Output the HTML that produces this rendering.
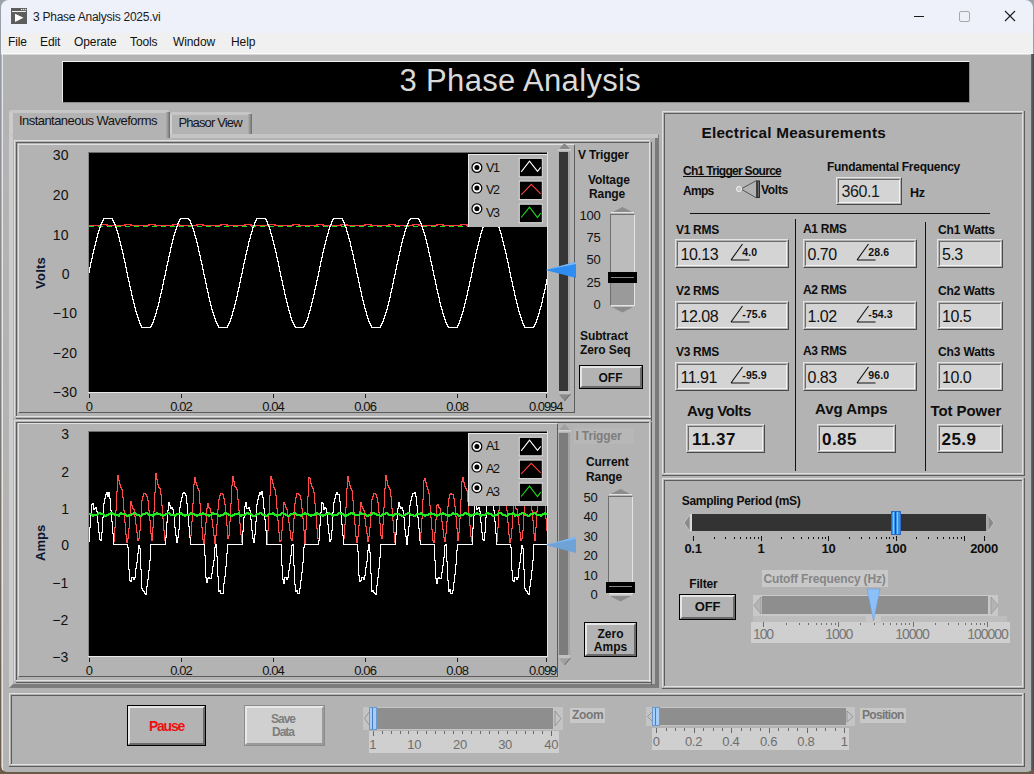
<!DOCTYPE html>
<html><head><meta charset="utf-8"><style>
html,body{margin:0;padding:0;width:1034px;height:774px;overflow:hidden;background:#555;}
body{position:relative;font-family:"Liberation Sans",sans-serif;}
body div, body svg{position:absolute;}
</style></head><body>
<div style="left:0;top:0;width:1034px;height:774px;background:linear-gradient(#9aa2ae,#7a7570 60%,#6a5a48);"></div>
<div style="left:1px;top:0px;width:1032px;height:772px;background:#b3b3b3;border-radius:8px 8px 6px 6px;overflow:hidden;"><div style="left:0;top:0;width:1032px;height:33px;background:#eef1f9;"></div><div style="left:0;top:33px;width:1032px;height:20px;background:#f0f0f0;"></div></div>
<div style="left:1px;top:53px;width:1032px;height:1px;background:#fafafa;"></div>
<div style="left:1px;top:54px;width:1032px;height:1px;background:#d6d6d6;"></div>
<div style="left:2px;top:54px;width:1px;height:716px;background:#e6e6e6;"></div>
<div style="left:1031px;top:54px;width:3px;height:716px;background:linear-gradient(90deg,#6a6a6a,#444);"></div>
<div style="left:11px;top:8px;width:16px;height:16px;background:#5d5d5d;"></div>
<div style="left:12px;top:11px;width:14px;height:1px;background:#f0f0f0;"></div>
<svg style="left:11px;top:8px" width="16" height="16"><polygon points="4,5.8 4,14 12.5,9.8" fill="#fff"/><circle cx="10.7" cy="1.5" r="0.7" fill="#f0f0f0"/><circle cx="12.7" cy="1.5" r="0.7" fill="#f0f0f0"/><circle cx="14.7" cy="1.5" r="0.7" fill="#f0f0f0"/></svg>
<div style="left:33px;top:11.24px;font-size:12px;line-height:12px;color:#1b1b1b;white-space:nowrap;letter-spacing:-0.25px;">3 Phase Analysis 2025.vi</div>
<div style="left:914px;top:16px;width:10px;height:1px;background:#1a1a1a;"></div>
<div style="left:959px;top:11px;width:9px;height:9px;border:1px solid #a8a8a8;border-radius:2px;"></div>
<svg style="left:1004px;top:10px" width="12" height="12"><path d="M1,1 L11,11 M11,1 L1,11" stroke="#1a1a1a" stroke-width="1.1"/></svg>
<div style="left:8px;top:36.04px;font-size:12px;line-height:12px;color:#111;white-space:nowrap;letter-spacing:-0.1px;">File</div>
<div style="left:40px;top:36.04px;font-size:12px;line-height:12px;color:#111;white-space:nowrap;letter-spacing:-0.1px;">Edit</div>
<div style="left:74px;top:36.04px;font-size:12px;line-height:12px;color:#111;white-space:nowrap;letter-spacing:-0.1px;">Operate</div>
<div style="left:130px;top:36.04px;font-size:12px;line-height:12px;color:#111;white-space:nowrap;letter-spacing:-0.1px;">Tools</div>
<div style="left:173px;top:36.04px;font-size:12px;line-height:12px;color:#111;white-space:nowrap;letter-spacing:-0.1px;">Window</div>
<div style="left:231px;top:36.04px;font-size:12px;line-height:12px;color:#111;white-space:nowrap;letter-spacing:-0.1px;">Help</div>
<div style="left:62px;top:61px;width:908px;height:42px;background:#000;border-top:1px solid #f0f0f0;border-left:1px solid #e8e8e8;border-right:1px solid #8a8a8a;border-bottom:1px solid #8a8a8a;box-sizing:border-box;"></div>
<div style="left:399.5px;top:64.76px;font-size:31px;line-height:31px;color:#dadada;white-space:nowrap;letter-spacing:0.35px;">3 Phase Analysis</div>
<div style="left:9px;top:110px;width:161px;height:30px;background:#b3b3b3;border-radius:3px 4px 0 0;border-top:3px solid #c6c6c6;border-left:4px solid #cbcbcb;box-sizing:border-box;"></div>
<div style="left:170px;top:112px;width:82px;height:22px;background:#b3b3b3;border-radius:3px 4px 0 0;border-top:3px solid #c6c6c6;border-left:2px solid #d0d0d0;box-sizing:border-box;"></div>
<div style="left:248px;top:114px;width:4px;height:20px;background:linear-gradient(90deg,#b0b0b0,#8a8a8a 60%,#6a6a6a);"></div>
<div style="left:19px;top:114.30px;font-size:13px;line-height:13px;color:#141414;white-space:nowrap;letter-spacing:-0.55px;">Instantaneous Waveforms</div>
<div style="left:178.4px;top:115.60px;font-size:13px;line-height:13px;color:#141414;white-space:nowrap;letter-spacing:-0.85px;">Phasor View</div>
<div style="left:10px;top:134px;width:648px;height:553px;background:#b3b3b3;"></div>
<div style="left:9px;top:134px;width:650px;height:554px;box-sizing:border-box;border-style:solid;border-width:4px 4px 4px 4px;border-color:#c6c6c6 #7a7a7a #7c7c7c #cdcdcd;"></div>
<div style="left:170px;top:134px;width:488px;height:4px;background:#c4c4c4;"></div>
<div style="left:13px;top:134px;width:153px;height:5px;background:#b3b3b3;"></div>
<div style="left:166px;top:112px;width:4px;height:26px;background:linear-gradient(90deg,#b0b0b0,#8a8a8a 60%,#6a6a6a);"></div>
<div style="left:14px;top:140px;width:636px;height:1px;background:#e0e0e0;"></div>
<div style="left:14px;top:140px;width:1px;height:277px;background:#e0e0e0;"></div>
<div style="left:16px;top:416px;width:635px;height:1px;background:#e0e0e0;"></div>
<div style="left:649px;top:142px;width:1px;height:276px;background:#e0e0e0;"></div>
<div style="left:16px;top:142px;width:633px;height:1px;background:#5c5c5c;"></div>
<div style="left:16px;top:142px;width:1px;height:274px;background:#5c5c5c;"></div>
<div style="left:16px;top:418px;width:636px;height:1px;background:#5c5c5c;"></div>
<div style="left:651px;top:142px;width:1px;height:279px;background:#5c5c5c;"></div>
<div style="left:14px;top:420px;width:636px;height:1px;background:#e0e0e0;"></div>
<div style="left:14px;top:420px;width:1px;height:261px;background:#e0e0e0;"></div>
<div style="left:16px;top:680px;width:635px;height:1px;background:#e0e0e0;"></div>
<div style="left:649px;top:422px;width:1px;height:260px;background:#e0e0e0;"></div>
<div style="left:16px;top:422px;width:633px;height:1px;background:#5c5c5c;"></div>
<div style="left:16px;top:422px;width:1px;height:258px;background:#5c5c5c;"></div>
<div style="left:16px;top:682px;width:636px;height:1px;background:#5c5c5c;"></div>
<div style="left:651px;top:422px;width:1px;height:263px;background:#5c5c5c;"></div>
<div style="left:18px;top:144px;width:556px;height:1px;background:#e0e0e0;"></div>
<div style="left:18px;top:144px;width:1px;height:268px;background:#e0e0e0;"></div>
<div style="left:19px;top:412px;width:556px;height:1px;background:#5c5c5c;"></div>
<div style="left:574px;top:145px;width:1px;height:268px;background:#5c5c5c;"></div>
<div style="left:18px;top:423px;width:539px;height:1px;background:#e0e0e0;"></div>
<div style="left:18px;top:423px;width:1px;height:253px;background:#e0e0e0;"></div>
<div style="left:19px;top:676px;width:539px;height:1px;background:#5c5c5c;"></div>
<div style="left:557px;top:424px;width:1px;height:253px;background:#5c5c5c;"></div>
<div style="left:88px;top:152px;width:459px;height:240px;background:#000;border-left:1px solid #8a8a8a;border-top:1px solid #6a6a6a;box-sizing:border-box;"></div>
<div style="left:88px;top:392px;width:460px;height:1px;background:#e8e8e8;"></div>
<div style="left:547px;top:152px;width:1px;height:240px;background:#e0e0e0;"></div>
<div style="left:88px;top:431px;width:459px;height:225px;background:#000;border-left:1px solid #8a8a8a;border-top:1px solid #6a6a6a;box-sizing:border-box;"></div>
<div style="left:88px;top:656px;width:460px;height:1px;background:#e8e8e8;"></div>
<div style="left:547px;top:431px;width:1px;height:225px;background:#e0e0e0;"></div>
<svg style="left:0;top:0" width="1034" height="774"><clipPath id="c1"><rect x="89" y="153" width="458" height="239"/></clipPath><clipPath id="c2"><rect x="89" y="432" width="458" height="224"/></clipPath><g clip-path="url(#c1)" fill="none"><path d="M89.00,225.50 L95.00,225.50 L95.00,225.50 L101.00,225.50 L101.00,224.50 L107.00,224.50 L107.00,225.50 L113.00,225.50 L113.00,225.50 L119.00,225.50 L119.00,225.50 L125.00,225.50 L125.00,224.50 L131.00,224.50 L131.00,225.50 L137.00,225.50 L137.00,225.50 L143.00,225.50 L143.00,225.50 L149.00,225.50 L149.00,224.50 L155.00,224.50 L155.00,225.50 L161.00,225.50 L161.00,225.50 L167.00,225.50 L167.00,225.50 L173.00,225.50 L173.00,224.50 L179.00,224.50 L179.00,225.50 L185.00,225.50 L185.00,225.50 L191.00,225.50 L191.00,225.50 L197.00,225.50 L197.00,224.50 L203.00,224.50 L203.00,225.50 L209.00,225.50 L209.00,225.50 L215.00,225.50 L215.00,225.50 L221.00,225.50 L221.00,224.50 L227.00,224.50 L227.00,225.50 L233.00,225.50 L233.00,225.50 L239.00,225.50 L239.00,225.50 L245.00,225.50 L245.00,224.50 L251.00,224.50 L251.00,225.50 L257.00,225.50 L257.00,225.50 L263.00,225.50 L263.00,225.50 L269.00,225.50 L269.00,224.50 L275.00,224.50 L275.00,225.50 L281.00,225.50 L281.00,225.50 L287.00,225.50 L287.00,225.50 L293.00,225.50 L293.00,224.50 L299.00,224.50 L299.00,225.50 L305.00,225.50 L305.00,225.50 L311.00,225.50 L311.00,225.50 L317.00,225.50 L317.00,224.50 L323.00,224.50 L323.00,225.50 L329.00,225.50 L329.00,225.50 L335.00,225.50 L335.00,225.50 L341.00,225.50 L341.00,224.50 L347.00,224.50 L347.00,225.50 L353.00,225.50 L353.00,225.50 L359.00,225.50 L359.00,225.50 L365.00,225.50 L365.00,224.50 L371.00,224.50 L371.00,225.50 L377.00,225.50 L377.00,225.50 L383.00,225.50 L383.00,225.50 L389.00,225.50 L389.00,224.50 L395.00,224.50 L395.00,225.50 L401.00,225.50 L401.00,225.50 L407.00,225.50 L407.00,225.50 L413.00,225.50 L413.00,224.50 L419.00,224.50 L419.00,225.50 L425.00,225.50 L425.00,225.50 L431.00,225.50 L431.00,225.50 L437.00,225.50 L437.00,224.50 L443.00,224.50 L443.00,225.50 L449.00,225.50 L449.00,225.50 L455.00,225.50 L455.00,225.50 L461.00,225.50 L461.00,224.50 L467.00,224.50 L467.00,225.50 L473.00,225.50 L473.00,225.50 L479.00,225.50 L479.00,225.50 L485.00,225.50 L485.00,224.50 L491.00,224.50 L491.00,225.50 L497.00,225.50 L497.00,225.50 L503.00,225.50 L503.00,225.50 L509.00,225.50 L509.00,224.50 L515.00,224.50 L515.00,225.50 L521.00,225.50 L521.00,225.50 L527.00,225.50 L527.00,225.50 L533.00,225.50 L533.00,224.50 L539.00,224.50 L539.00,225.50 L545.00,225.50 L545.00,225.50 L551.00,225.50" stroke="#ff3c3c" stroke-width="1.1" shape-rendering="crispEdges"/><path d="M89,226.5 H547" stroke="#19e019" stroke-width="1.2" stroke-dasharray="5,4" shape-rendering="crispEdges"/><path d="M89,267h1v6h-1zM90,262h1v6h-1zM91,258h1v5h-1zM92,253h1v6h-1zM93,249h1v5h-1zM94,245h1v5h-1zM95,241h1v5h-1zM96,237h1v5h-1zM97,233h1v5h-1zM98,230h1v4h-1zM99,227h1v4h-1zM100,224h1v4h-1zM101,222h1v3h-1zM102,220h1v3h-1zM103,218h1v3h-1zM104,218h1v1h-1zM105,218h1v1h-1zM106,218h1v1h-1zM107,218h1v1h-1zM108,218h1v1h-1zM109,218h1v1h-1zM110,218h1v1h-1zM111,218h1v1h-1zM112,218h1v3h-1zM113,220h1v3h-1zM114,222h1v3h-1zM115,224h1v4h-1zM116,227h1v4h-1zM117,230h1v4h-1zM118,233h1v5h-1zM119,237h1v5h-1zM120,241h1v5h-1zM121,245h1v5h-1zM122,249h1v5h-1zM123,253h1v6h-1zM124,258h1v5h-1zM125,262h1v6h-1zM126,267h1v6h-1zM127,272h1v6h-1zM128,277h1v5h-1zM129,281h1v6h-1zM130,286h1v5h-1zM131,290h1v6h-1zM132,295h1v5h-1zM133,299h1v5h-1zM134,303h1v5h-1zM135,307h1v5h-1zM136,311h1v4h-1zM137,314h1v4h-1zM138,317h1v4h-1zM139,320h1v4h-1zM140,323h1v3h-1zM141,325h1v3h-1zM142,327h1v1h-1zM143,327h1v1h-1zM144,327h1v1h-1zM145,327h1v1h-1zM146,327h1v1h-1zM147,327h1v1h-1zM148,327h1v1h-1zM149,327h1v1h-1zM150,326h1v2h-1zM151,324h1v3h-1zM152,322h1v3h-1zM153,319h1v4h-1zM154,316h1v4h-1zM155,313h1v4h-1zM156,309h1v5h-1zM157,306h1v4h-1zM158,302h1v5h-1zM159,297h1v6h-1zM160,293h1v5h-1zM161,289h1v5h-1zM162,284h1v6h-1zM163,279h1v6h-1zM164,275h1v5h-1zM165,270h1v6h-1zM166,265h1v6h-1zM167,261h1v5h-1zM168,256h1v6h-1zM169,252h1v5h-1zM170,247h1v6h-1zM171,243h1v5h-1zM172,239h1v5h-1zM173,235h1v5h-1zM174,232h1v4h-1zM175,229h1v4h-1zM176,226h1v4h-1zM177,223h1v4h-1zM178,221h1v3h-1zM179,219h1v3h-1zM180,218h1v2h-1zM181,218h1v1h-1zM182,218h1v1h-1zM183,218h1v1h-1zM184,218h1v1h-1zM185,218h1v1h-1zM186,218h1v1h-1zM187,218h1v1h-1zM188,218h1v2h-1zM189,219h1v2h-1zM190,220h1v4h-1zM191,223h1v3h-1zM192,225h1v4h-1zM193,228h1v4h-1zM194,231h1v5h-1zM195,235h1v4h-1zM196,238h1v5h-1zM197,242h1v5h-1zM198,246h1v6h-1zM199,251h1v5h-1zM200,255h1v6h-1zM201,260h1v5h-1zM202,264h1v6h-1zM203,269h1v6h-1zM204,274h1v5h-1zM205,278h1v6h-1zM206,283h1v6h-1zM207,288h1v5h-1zM208,292h1v6h-1zM209,297h1v5h-1zM210,301h1v5h-1zM211,305h1v5h-1zM212,309h1v4h-1zM213,312h1v4h-1zM214,315h1v4h-1zM215,318h1v4h-1zM216,321h1v3h-1zM217,323h1v3h-1zM218,325h1v3h-1zM219,327h1v1h-1zM220,327h1v1h-1zM221,327h1v1h-1zM222,327h1v1h-1zM223,327h1v1h-1zM224,327h1v1h-1zM225,327h1v1h-1zM226,327h1v1h-1zM227,325h1v3h-1zM228,323h1v3h-1zM229,321h1v3h-1zM230,318h1v4h-1zM231,315h1v4h-1zM232,311h1v5h-1zM233,308h1v4h-1zM234,304h1v5h-1zM235,300h1v5h-1zM236,296h1v5h-1zM237,291h1v6h-1zM238,287h1v5h-1zM239,282h1v6h-1zM240,277h1v6h-1zM241,273h1v5h-1zM242,268h1v6h-1zM243,263h1v6h-1zM244,259h1v5h-1zM245,254h1v6h-1zM246,250h1v5h-1zM247,246h1v5h-1zM248,241h1v6h-1zM249,238h1v4h-1zM250,234h1v5h-1zM251,231h1v4h-1zM252,227h1v5h-1zM253,225h1v3h-1zM254,222h1v4h-1zM255,220h1v3h-1zM256,218h1v3h-1zM257,218h1v1h-1zM258,218h1v1h-1zM259,218h1v1h-1zM260,218h1v1h-1zM261,218h1v1h-1zM262,218h1v1h-1zM263,218h1v1h-1zM264,218h1v1h-1zM265,218h1v2h-1zM266,219h1v3h-1zM267,221h1v4h-1zM268,224h1v3h-1zM269,226h1v4h-1zM270,229h1v5h-1zM271,233h1v4h-1zM272,236h1v5h-1zM273,240h1v5h-1zM274,244h1v5h-1zM275,248h1v5h-1zM276,252h1v6h-1zM277,257h1v5h-1zM278,261h1v6h-1zM279,266h1v6h-1zM280,271h1v6h-1zM281,276h1v5h-1zM282,280h1v6h-1zM283,285h1v5h-1zM284,289h1v6h-1zM285,294h1v5h-1zM286,298h1v5h-1zM287,302h1v5h-1zM288,306h1v5h-1zM289,310h1v4h-1zM290,313h1v5h-1zM291,317h1v4h-1zM292,320h1v3h-1zM293,322h1v3h-1zM294,324h1v3h-1zM295,326h1v2h-1zM296,327h1v1h-1zM297,327h1v1h-1zM298,327h1v1h-1zM299,327h1v1h-1zM300,327h1v1h-1zM301,327h1v1h-1zM302,327h1v1h-1zM303,326h1v2h-1zM304,324h1v3h-1zM305,322h1v3h-1zM306,320h1v3h-1zM307,317h1v4h-1zM308,313h1v5h-1zM309,310h1v4h-1zM310,306h1v5h-1zM311,302h1v5h-1zM312,298h1v5h-1zM313,294h1v5h-1zM314,289h1v6h-1zM315,285h1v5h-1zM316,280h1v6h-1zM317,276h1v5h-1zM318,271h1v6h-1zM319,266h1v6h-1zM320,261h1v6h-1zM321,257h1v5h-1zM322,252h1v6h-1zM323,248h1v5h-1zM324,244h1v5h-1zM325,240h1v5h-1zM326,236h1v5h-1zM327,233h1v4h-1zM328,229h1v5h-1zM329,226h1v4h-1zM330,224h1v3h-1zM331,221h1v4h-1zM332,219h1v3h-1zM333,218h1v2h-1zM334,218h1v1h-1zM335,218h1v1h-1zM336,218h1v1h-1zM337,218h1v1h-1zM338,218h1v1h-1zM339,218h1v1h-1zM340,218h1v1h-1zM341,218h1v1h-1zM342,218h1v3h-1zM343,220h1v3h-1zM344,222h1v4h-1zM345,225h1v3h-1zM346,227h1v5h-1zM347,231h1v4h-1zM348,234h1v5h-1zM349,238h1v4h-1zM350,241h1v6h-1zM351,246h1v5h-1zM352,250h1v5h-1zM353,254h1v6h-1zM354,259h1v5h-1zM355,263h1v6h-1zM356,268h1v6h-1zM357,273h1v5h-1zM358,277h1v6h-1zM359,282h1v6h-1zM360,287h1v5h-1zM361,291h1v6h-1zM362,296h1v5h-1zM363,300h1v5h-1zM364,304h1v5h-1zM365,308h1v4h-1zM366,311h1v5h-1zM367,315h1v4h-1zM368,318h1v4h-1zM369,321h1v3h-1zM370,323h1v3h-1zM371,325h1v3h-1zM372,327h1v1h-1zM373,327h1v1h-1zM374,327h1v1h-1zM375,327h1v1h-1zM376,327h1v1h-1zM377,327h1v1h-1zM378,327h1v1h-1zM379,327h1v1h-1zM380,325h1v3h-1zM381,323h1v3h-1zM382,321h1v3h-1zM383,318h1v4h-1zM384,315h1v4h-1zM385,312h1v4h-1zM386,309h1v4h-1zM387,305h1v5h-1zM388,301h1v5h-1zM389,297h1v5h-1zM390,292h1v6h-1zM391,288h1v5h-1zM392,283h1v6h-1zM393,278h1v6h-1zM394,274h1v5h-1zM395,269h1v6h-1zM396,264h1v6h-1zM397,260h1v5h-1zM398,255h1v6h-1zM399,251h1v5h-1zM400,246h1v6h-1zM401,242h1v5h-1zM402,238h1v5h-1zM403,235h1v4h-1zM404,231h1v5h-1zM405,228h1v4h-1zM406,225h1v4h-1zM407,223h1v3h-1zM408,220h1v4h-1zM409,219h1v2h-1zM410,218h1v2h-1zM411,218h1v1h-1zM412,218h1v1h-1zM413,218h1v1h-1zM414,218h1v1h-1zM415,218h1v1h-1zM416,218h1v1h-1zM417,218h1v1h-1zM418,218h1v2h-1zM419,219h1v3h-1zM420,221h1v3h-1zM421,223h1v4h-1zM422,226h1v4h-1zM423,229h1v4h-1zM424,232h1v4h-1zM425,235h1v5h-1zM426,239h1v5h-1zM427,243h1v5h-1zM428,247h1v6h-1zM429,252h1v5h-1zM430,256h1v6h-1zM431,261h1v5h-1zM432,265h1v6h-1zM433,270h1v6h-1zM434,275h1v5h-1zM435,279h1v6h-1zM436,284h1v6h-1zM437,289h1v5h-1zM438,293h1v5h-1zM439,297h1v6h-1zM440,302h1v5h-1zM441,306h1v4h-1zM442,309h1v5h-1zM443,313h1v4h-1zM444,316h1v4h-1zM445,319h1v4h-1zM446,322h1v3h-1zM447,324h1v3h-1zM448,326h1v2h-1zM449,327h1v1h-1zM450,327h1v1h-1zM451,327h1v1h-1zM452,327h1v1h-1zM453,327h1v1h-1zM454,327h1v1h-1zM455,327h1v1h-1zM456,327h1v1h-1zM457,325h1v3h-1zM458,323h1v3h-1zM459,320h1v4h-1zM460,317h1v4h-1zM461,314h1v4h-1zM462,311h1v4h-1zM463,307h1v5h-1zM464,303h1v5h-1zM465,299h1v5h-1zM466,295h1v5h-1zM467,290h1v6h-1zM468,286h1v5h-1zM469,281h1v6h-1zM470,277h1v5h-1zM471,272h1v6h-1zM472,267h1v6h-1zM473,262h1v6h-1zM474,258h1v5h-1zM475,253h1v6h-1zM476,249h1v5h-1zM477,245h1v5h-1zM478,241h1v5h-1zM479,237h1v5h-1zM480,233h1v5h-1zM481,230h1v4h-1zM482,227h1v4h-1zM483,224h1v4h-1zM484,222h1v3h-1zM485,220h1v3h-1zM486,218h1v3h-1zM487,218h1v1h-1zM488,218h1v1h-1zM489,218h1v1h-1zM490,218h1v1h-1zM491,218h1v1h-1zM492,218h1v1h-1zM493,218h1v1h-1zM494,218h1v1h-1zM495,218h1v3h-1zM496,220h1v3h-1zM497,222h1v3h-1zM498,224h1v4h-1zM499,227h1v4h-1zM500,230h1v4h-1zM501,233h1v5h-1zM502,237h1v5h-1zM503,241h1v5h-1zM504,245h1v5h-1zM505,249h1v5h-1zM506,253h1v6h-1zM507,258h1v5h-1zM508,262h1v6h-1zM509,267h1v6h-1zM510,272h1v6h-1zM511,277h1v5h-1zM512,281h1v6h-1zM513,286h1v5h-1zM514,290h1v6h-1zM515,295h1v5h-1zM516,299h1v5h-1zM517,303h1v5h-1zM518,307h1v5h-1zM519,311h1v4h-1zM520,314h1v4h-1zM521,317h1v4h-1zM522,320h1v4h-1zM523,323h1v3h-1zM524,325h1v3h-1zM525,327h1v1h-1zM526,327h1v1h-1zM527,327h1v1h-1zM528,327h1v1h-1zM529,327h1v1h-1zM530,327h1v1h-1zM531,327h1v1h-1zM532,327h1v1h-1zM533,326h1v2h-1zM534,324h1v3h-1zM535,322h1v3h-1zM536,319h1v4h-1zM537,316h1v4h-1zM538,313h1v4h-1zM539,309h1v5h-1zM540,306h1v4h-1zM541,302h1v5h-1zM542,297h1v6h-1zM543,293h1v5h-1zM544,289h1v5h-1zM545,284h1v6h-1zM546,279h1v6h-1z" fill="#fff" shape-rendering="crispEdges"/></g><g clip-path="url(#c2)" fill="none"><path d="M89,527h1v15h-1zM90,515h1v13h-1zM91,504h1v12h-1zM92,503h1v2h-1zM93,503h1v7h-1zM94,508h1v2h-1zM95,507h1v2h-1zM96,507h1v5h-1zM97,511h1v12h-1zM98,522h1v11h-1zM99,532h1v8h-1zM100,539h1v2h-1zM101,532h1v9h-1zM102,517h1v16h-1zM103,503h1v15h-1zM104,498h1v6h-1zM105,494h1v5h-1zM106,492h1v3h-1zM107,492h1v5h-1zM108,492h1v5h-1zM109,492h1v7h-1zM110,498h1v13h-1zM111,510h1v12h-1zM112,521h1v13h-1zM113,533h1v9h-1zM114,527h1v15h-1zM115,510h1v18h-1zM116,491h1v20h-1zM117,475h1v17h-1zM118,475h1v6h-1zM119,480h1v5h-1zM120,484h1v4h-1zM121,487h1v3h-1zM122,489h1v9h-1zM123,497h1v14h-1zM124,510h1v13h-1zM125,522h1v13h-1zM126,534h1v9h-1zM127,538h1v5h-1zM128,528h1v11h-1zM129,514h1v15h-1zM130,501h1v14h-1zM131,501h1v5h-1zM132,505h1v4h-1zM133,508h1v2h-1zM134,509h1v8h-1zM135,516h1v9h-1zM136,524h1v9h-1zM137,532h1v9h-1zM138,538h1v3h-1zM139,530h1v9h-1zM140,515h1v16h-1zM141,500h1v16h-1zM142,496h1v5h-1zM143,493h1v4h-1zM144,493h1v1h-1zM145,493h1v2h-1zM146,494h1v3h-1zM147,496h1v5h-1zM148,500h1v11h-1zM149,510h1v11h-1zM150,520h1v14h-1zM151,533h1v8h-1zM152,527h1v14h-1zM153,511h1v17h-1zM154,492h1v20h-1zM155,473h1v20h-1zM156,473h1v7h-1zM157,479h1v6h-1zM158,484h1v4h-1zM159,487h1v2h-1zM160,488h1v7h-1zM161,494h1v12h-1zM162,505h1v14h-1zM163,518h1v13h-1zM164,530h1v11h-1zM165,535h1v6h-1zM166,521h1v15h-1zM167,510h1v12h-1zM168,502h1v9h-1zM169,502h1v4h-1zM170,505h1v4h-1zM171,507h1v2h-1zM172,507h1v3h-1zM173,509h1v6h-1zM174,514h1v14h-1zM175,527h1v9h-1zM176,535h1v8h-1zM177,537h1v6h-1zM178,529h1v9h-1zM179,507h1v23h-1zM180,501h1v7h-1zM181,497h1v5h-1zM182,493h1v5h-1zM183,492h1v2h-1zM184,492h1v2h-1zM185,493h1v3h-1zM186,495h1v9h-1zM187,503h1v13h-1zM188,515h1v12h-1zM189,526h1v12h-1zM190,535h1v3h-1zM191,521h1v15h-1zM192,503h1v19h-1zM193,484h1v20h-1zM194,477h1v8h-1zM195,477h1v6h-1zM196,482h1v4h-1zM197,485h1v4h-1zM198,488h1v3h-1zM199,490h1v14h-1zM200,503h1v13h-1zM201,515h1v13h-1zM202,527h1v13h-1zM203,539h1v5h-1zM204,534h1v10h-1zM205,522h1v13h-1zM206,508h1v15h-1zM207,503h1v6h-1zM208,503h1v5h-1zM209,507h1v2h-1zM210,508h1v5h-1zM211,512h1v8h-1zM212,519h1v9h-1zM213,527h1v9h-1zM214,535h1v9h-1zM215,535h1v9h-1zM216,524h1v12h-1zM217,509h1v16h-1zM218,499h1v11h-1zM219,495h1v5h-1zM220,493h1v3h-1zM221,493h1v1h-1zM222,493h1v2h-1zM223,494h1v5h-1zM224,498h1v7h-1zM225,504h1v11h-1zM226,514h1v12h-1zM227,525h1v14h-1zM228,535h1v4h-1zM229,521h1v15h-1zM230,503h1v19h-1zM231,485h1v19h-1zM232,476h1v10h-1zM233,476h1v6h-1zM234,481h1v6h-1zM235,486h1v2h-1zM236,487h1v3h-1zM237,489h1v11h-1zM238,499h1v12h-1zM239,510h1v14h-1zM240,523h1v12h-1zM241,534h1v9h-1zM242,530h1v13h-1zM243,517h1v14h-1zM244,506h1v12h-1zM245,502h1v5h-1zM246,502h1v7h-1zM247,508h1v1h-1zM248,507h1v2h-1zM249,507h1v4h-1zM250,510h1v10h-1zM251,519h1v12h-1zM252,530h1v9h-1zM253,538h1v5h-1zM254,534h1v9h-1zM255,521h1v14h-1zM256,504h1v18h-1zM257,499h1v6h-1zM258,495h1v5h-1zM259,492h1v4h-1zM260,492h1v3h-1zM261,491h1v4h-1zM262,491h1v7h-1zM263,497h1v12h-1zM264,508h1v12h-1zM265,519h1v12h-1zM266,530h1v15h-1zM267,530h1v15h-1zM268,514h1v17h-1zM269,495h1v20h-1zM270,476h1v20h-1zM271,476h1v4h-1zM272,479h1v5h-1zM273,483h1v5h-1zM274,487h1v3h-1zM275,489h1v7h-1zM276,495h1v14h-1zM277,508h1v13h-1zM278,520h1v13h-1zM279,532h1v10h-1zM280,540h1v2h-1zM281,530h1v11h-1zM282,517h1v14h-1zM283,502h1v16h-1zM284,502h1v3h-1zM285,504h1v4h-1zM286,507h1v3h-1zM287,509h1v7h-1zM288,515h1v8h-1zM289,522h1v9h-1zM290,530h1v9h-1zM291,538h1v3h-1zM292,532h1v9h-1zM293,518h1v15h-1zM294,503h1v16h-1zM295,497h1v7h-1zM296,493h1v5h-1zM297,493h1v1h-1zM298,493h1v2h-1zM299,494h1v2h-1zM300,495h1v5h-1zM301,499h1v10h-1zM302,508h1v11h-1zM303,518h1v13h-1zM304,530h1v14h-1zM305,529h1v15h-1zM306,514h1v16h-1zM307,496h1v19h-1zM308,477h1v20h-1zM309,477h1v2h-1zM310,478h1v6h-1zM311,483h1v4h-1zM312,486h1v3h-1zM313,488h1v5h-1zM314,492h1v12h-1zM315,503h1v13h-1zM316,515h1v14h-1zM317,528h1v11h-1zM318,538h1v1h-1zM319,524h1v15h-1zM320,512h1v13h-1zM321,502h1v11h-1zM322,502h1v2h-1zM323,503h1v7h-1zM324,507h1v3h-1zM325,507h1v2h-1zM326,508h1v5h-1zM327,512h1v13h-1zM328,524h1v10h-1zM329,533h1v9h-1zM330,539h1v3h-1zM331,530h1v10h-1zM332,512h1v19h-1zM333,502h1v11h-1zM334,498h1v5h-1zM335,494h1v5h-1zM336,492h1v3h-1zM337,492h1v3h-1zM338,494h1v1h-1zM339,494h1v8h-1zM340,501h1v12h-1zM341,512h1v13h-1zM342,524h1v12h-1zM343,535h1v4h-1zM344,524h1v15h-1zM345,507h1v18h-1zM346,488h1v20h-1zM347,476h1v13h-1zM348,476h1v6h-1zM349,481h1v5h-1zM350,485h1v4h-1zM351,488h1v3h-1zM352,490h1v11h-1zM353,500h1v13h-1zM354,512h1v13h-1zM355,524h1v13h-1zM356,536h1v7h-1zM357,536h1v7h-1zM358,525h1v12h-1zM359,511h1v15h-1zM360,502h1v10h-1zM361,502h1v5h-1zM362,506h1v3h-1zM363,508h1v3h-1zM364,510h1v9h-1zM365,518h1v9h-1zM366,526h1v8h-1zM367,533h1v9h-1zM368,536h1v6h-1zM369,527h1v10h-1zM370,512h1v16h-1zM371,499h1v14h-1zM372,496h1v4h-1zM373,493h1v4h-1zM374,493h1v1h-1zM375,493h1v2h-1zM376,494h1v4h-1zM377,497h1v6h-1zM378,502h1v11h-1zM379,512h1v12h-1zM380,523h1v13h-1zM381,535h1v4h-1zM382,524h1v15h-1zM383,507h1v18h-1zM384,488h1v20h-1zM385,475h1v14h-1zM386,475h1v6h-1zM387,480h1v6h-1zM388,485h1v3h-1zM389,487h1v3h-1zM390,489h1v8h-1zM391,496h1v13h-1zM392,508h1v13h-1zM393,520h1v13h-1zM394,532h1v11h-1zM395,532h1v11h-1zM396,519h1v14h-1zM397,508h1v12h-1zM398,502h1v7h-1zM399,502h1v5h-1zM400,506h1v3h-1zM401,507h1v2h-1zM402,507h1v4h-1zM403,510h1v8h-1zM404,517h1v13h-1zM405,529h1v8h-1zM406,536h1v9h-1zM407,535h1v10h-1zM408,526h1v10h-1zM409,505h1v22h-1zM410,500h1v6h-1zM411,496h1v5h-1zM412,493h1v4h-1zM413,493h1v1h-1zM414,492h1v2h-1zM415,492h1v5h-1zM416,496h1v10h-1zM417,505h1v13h-1zM418,517h1v12h-1zM419,528h1v13h-1zM420,532h1v9h-1zM421,518h1v15h-1zM422,499h1v20h-1zM423,480h1v20h-1zM424,478h1v3h-1zM425,478h1v5h-1zM426,482h1v5h-1zM427,486h1v4h-1zM428,489h1v5h-1zM429,493h1v13h-1zM430,505h1v13h-1zM431,517h1v13h-1zM432,529h1v12h-1zM433,540h1v3h-1zM434,532h1v11h-1zM435,519h1v14h-1zM436,505h1v15h-1zM437,504h1v2h-1zM438,504h1v4h-1zM439,507h1v2h-1zM440,508h1v6h-1zM441,513h1v9h-1zM442,521h1v9h-1zM443,529h1v9h-1zM444,537h1v5h-1zM445,533h1v9h-1zM446,521h1v13h-1zM447,506h1v16h-1zM448,498h1v9h-1zM449,494h1v5h-1zM450,493h1v2h-1zM451,493h1v2h-1zM452,494h1v1h-1zM453,494h1v5h-1zM454,498h1v9h-1zM455,506h1v11h-1zM456,516h1v13h-1zM457,528h1v13h-1zM458,532h1v9h-1zM459,518h1v15h-1zM460,499h1v20h-1zM461,481h1v19h-1zM462,477h1v5h-1zM463,477h1v6h-1zM464,482h1v5h-1zM465,486h1v3h-1zM466,488h1v3h-1zM467,490h1v12h-1zM468,501h1v13h-1zM469,513h1v13h-1zM470,525h1v12h-1zM471,536h1v6h-1zM472,527h1v15h-1zM473,515h1v13h-1zM474,504h1v12h-1zM475,503h1v2h-1zM476,503h1v7h-1zM477,508h1v2h-1zM478,507h1v2h-1zM479,507h1v5h-1zM480,511h1v12h-1zM481,522h1v11h-1zM482,532h1v8h-1zM483,539h1v2h-1zM484,532h1v9h-1zM485,517h1v16h-1zM486,503h1v15h-1zM487,498h1v6h-1zM488,494h1v5h-1zM489,492h1v3h-1zM490,492h1v5h-1zM491,492h1v5h-1zM492,492h1v7h-1zM493,498h1v13h-1zM494,510h1v12h-1zM495,521h1v13h-1zM496,533h1v9h-1zM497,527h1v15h-1zM498,510h1v18h-1zM499,491h1v20h-1zM500,475h1v17h-1zM501,475h1v6h-1zM502,480h1v5h-1zM503,484h1v4h-1zM504,487h1v3h-1zM505,489h1v10h-1zM506,498h1v13h-1zM507,510h1v13h-1zM508,522h1v13h-1zM509,534h1v9h-1zM510,538h1v5h-1zM511,528h1v11h-1zM512,514h1v15h-1zM513,501h1v14h-1zM514,501h1v5h-1zM515,505h1v4h-1zM516,508h1v2h-1zM517,509h1v8h-1zM518,516h1v9h-1zM519,524h1v9h-1zM520,532h1v9h-1zM521,538h1v3h-1zM522,530h1v9h-1zM523,515h1v16h-1zM524,500h1v16h-1zM525,496h1v5h-1zM526,493h1v4h-1zM527,493h1v1h-1zM528,493h1v2h-1zM529,494h1v3h-1zM530,496h1v5h-1zM531,500h1v11h-1zM532,510h1v11h-1zM533,520h1v14h-1zM534,533h1v8h-1zM535,527h1v14h-1zM536,511h1v17h-1zM537,492h1v20h-1zM538,473h1v20h-1zM539,473h1v7h-1zM540,479h1v6h-1zM541,484h1v4h-1zM542,487h1v2h-1zM543,488h1v7h-1zM544,494h1v12h-1zM545,505h1v14h-1zM546,518h1v13h-1z" fill="#ff4a4a" shape-rendering="crispEdges"/><path d="M89,527h1v15h-1zM90,515h1v13h-1zM91,504h1v12h-1zM92,503h1v2h-1zM93,503h1v7h-1zM94,508h1v2h-1zM95,507h1v2h-1zM96,507h1v5h-1zM97,511h1v12h-1zM98,522h1v11h-1zM99,532h1v8h-1zM100,539h1v2h-1zM101,532h1v9h-1zM102,517h1v16h-1zM103,503h1v15h-1zM104,498h1v6h-1zM105,494h1v5h-1zM106,492h1v3h-1zM107,492h1v5h-1zM108,492h1v5h-1zM109,492h1v7h-1zM110,498h1v13h-1zM111,510h1v12h-1zM112,521h1v13h-1zM113,533h1v12h-1zM114,544h1v1h-1zM115,544h1v1h-1zM116,544h1v1h-1zM117,544h1v1h-1zM118,544h1v1h-1zM119,544h1v1h-1zM120,544h1v1h-1zM121,544h1v1h-1zM122,544h1v1h-1zM123,544h1v1h-1zM124,544h1v1h-1zM125,544h1v1h-1zM126,544h1v1h-1zM127,544h1v4h-1zM128,547h1v23h-1zM129,569h1v12h-1zM130,580h1v2h-1zM131,577h1v5h-1zM132,577h1v1h-1zM133,577h1v3h-1zM134,577h1v3h-1zM135,568h1v10h-1zM136,562h1v7h-1zM137,553h1v10h-1zM138,545h1v9h-1zM139,545h1v4h-1zM140,548h1v22h-1zM141,569h1v20h-1zM142,588h1v3h-1zM143,590h1v2h-1zM144,591h1v3h-1zM145,593h1v2h-1zM146,586h1v9h-1zM147,579h1v8h-1zM148,570h1v10h-1zM149,560h1v11h-1zM150,544h1v17h-1zM151,544h1v1h-1zM152,544h1v1h-1zM153,544h1v1h-1zM154,544h1v1h-1zM155,544h1v1h-1zM156,544h1v1h-1zM157,544h1v1h-1zM158,544h1v1h-1zM159,544h1v1h-1zM160,544h1v1h-1zM161,544h1v1h-1zM162,544h1v1h-1zM163,544h1v1h-1zM164,544h1v1h-1zM165,537h1v8h-1zM166,522h1v16h-1zM167,510h1v13h-1zM168,502h1v9h-1zM169,502h1v4h-1zM170,505h1v4h-1zM171,507h1v2h-1zM172,507h1v3h-1zM173,509h1v6h-1zM174,514h1v14h-1zM175,527h1v9h-1zM176,535h1v8h-1zM177,537h1v6h-1zM178,529h1v9h-1zM179,507h1v23h-1zM180,501h1v7h-1zM181,497h1v5h-1zM182,493h1v5h-1zM183,492h1v2h-1zM184,492h1v2h-1zM185,493h1v3h-1zM186,495h1v9h-1zM187,503h1v13h-1zM188,515h1v12h-1zM189,526h1v12h-1zM190,537h1v8h-1zM191,544h1v1h-1zM192,544h1v1h-1zM193,544h1v1h-1zM194,544h1v1h-1zM195,544h1v1h-1zM196,544h1v1h-1zM197,544h1v1h-1zM198,544h1v1h-1zM199,544h1v1h-1zM200,544h1v1h-1zM201,544h1v1h-1zM202,544h1v1h-1zM203,544h1v1h-1zM204,544h1v12h-1zM205,555h1v23h-1zM206,577h1v6h-1zM207,578h1v5h-1zM208,577h1v2h-1zM209,577h1v2h-1zM210,578h1v1h-1zM211,573h1v6h-1zM212,566h1v8h-1zM213,560h1v7h-1zM214,547h1v14h-1zM215,544h1v4h-1zM216,544h1v13h-1zM217,556h1v21h-1zM218,576h1v16h-1zM219,590h1v2h-1zM220,590h1v4h-1zM221,593h1v1h-1zM222,593h1v1h-1zM223,583h1v11h-1zM224,576h1v8h-1zM225,566h1v11h-1zM226,553h1v14h-1zM227,544h1v10h-1zM228,544h1v1h-1zM229,544h1v1h-1zM230,544h1v1h-1zM231,544h1v1h-1zM232,544h1v1h-1zM233,544h1v1h-1zM234,544h1v1h-1zM235,544h1v1h-1zM236,544h1v1h-1zM237,544h1v1h-1zM238,544h1v1h-1zM239,544h1v1h-1zM240,544h1v1h-1zM241,544h1v1h-1zM242,531h1v14h-1zM243,517h1v15h-1zM244,506h1v12h-1zM245,502h1v5h-1zM246,502h1v7h-1zM247,508h1v1h-1zM248,507h1v2h-1zM249,507h1v4h-1zM250,510h1v10h-1zM251,519h1v12h-1zM252,530h1v9h-1zM253,538h1v5h-1zM254,534h1v9h-1zM255,521h1v14h-1zM256,504h1v18h-1zM257,499h1v6h-1zM258,495h1v5h-1zM259,492h1v4h-1zM260,492h1v3h-1zM261,491h1v4h-1zM262,491h1v7h-1zM263,497h1v12h-1zM264,508h1v12h-1zM265,519h1v12h-1zM266,530h1v15h-1zM267,544h1v1h-1zM268,544h1v1h-1zM269,544h1v1h-1zM270,544h1v1h-1zM271,544h1v1h-1zM272,544h1v1h-1zM273,544h1v1h-1zM274,544h1v1h-1zM275,544h1v1h-1zM276,544h1v1h-1zM277,544h1v1h-1zM278,544h1v1h-1zM279,544h1v1h-1zM280,544h1v1h-1zM281,544h1v22h-1zM282,565h1v15h-1zM283,579h1v5h-1zM284,577h1v7h-1zM285,577h1v1h-1zM286,577h1v3h-1zM287,577h1v3h-1zM288,570h1v8h-1zM289,563h1v8h-1zM290,555h1v9h-1zM291,545h1v11h-1zM292,544h1v2h-1zM293,544h1v22h-1zM294,565h1v20h-1zM295,584h1v8h-1zM296,590h1v2h-1zM297,590h1v4h-1zM298,593h1v1h-1zM299,588h1v6h-1zM300,580h1v9h-1zM301,572h1v9h-1zM302,562h1v11h-1zM303,547h1v16h-1zM304,544h1v4h-1zM305,544h1v1h-1zM306,544h1v1h-1zM307,544h1v1h-1zM308,544h1v1h-1zM309,544h1v1h-1zM310,544h1v1h-1zM311,544h1v1h-1zM312,544h1v1h-1zM313,544h1v1h-1zM314,544h1v1h-1zM315,544h1v1h-1zM316,544h1v1h-1zM317,544h1v1h-1zM318,540h1v5h-1zM319,525h1v16h-1zM320,512h1v14h-1zM321,502h1v11h-1zM322,502h1v2h-1zM323,503h1v7h-1zM324,507h1v3h-1zM325,507h1v2h-1zM326,508h1v5h-1zM327,512h1v13h-1zM328,524h1v10h-1zM329,533h1v9h-1zM330,539h1v3h-1zM331,530h1v10h-1zM332,512h1v19h-1zM333,502h1v11h-1zM334,498h1v5h-1zM335,494h1v5h-1zM336,492h1v3h-1zM337,492h1v3h-1zM338,494h1v1h-1zM339,494h1v8h-1zM340,501h1v12h-1zM341,512h1v13h-1zM342,524h1v12h-1zM343,535h1v10h-1zM344,544h1v1h-1zM345,544h1v1h-1zM346,544h1v1h-1zM347,544h1v1h-1zM348,544h1v1h-1zM349,544h1v1h-1zM350,544h1v1h-1zM351,544h1v1h-1zM352,544h1v1h-1zM353,544h1v1h-1zM354,544h1v1h-1zM355,544h1v1h-1zM356,544h1v1h-1zM357,544h1v8h-1zM358,551h1v25h-1zM359,575h1v7h-1zM360,580h1v2h-1zM361,577h1v4h-1zM362,577h1v1h-1zM363,577h1v3h-1zM364,575h1v5h-1zM365,567h1v9h-1zM366,561h1v7h-1zM367,550h1v12h-1zM368,544h1v7h-1zM369,544h1v9h-1zM370,552h1v22h-1zM371,573h1v19h-1zM372,590h1v2h-1zM373,590h1v3h-1zM374,592h1v2h-1zM375,593h1v2h-1zM376,585h1v10h-1zM377,577h1v9h-1zM378,568h1v10h-1zM379,557h1v12h-1zM380,544h1v14h-1zM381,544h1v1h-1zM382,544h1v1h-1zM383,544h1v1h-1zM384,544h1v1h-1zM385,544h1v1h-1zM386,544h1v1h-1zM387,544h1v1h-1zM388,544h1v1h-1zM389,544h1v1h-1zM390,544h1v1h-1zM391,544h1v1h-1zM392,544h1v1h-1zM393,544h1v1h-1zM394,544h1v1h-1zM395,534h1v11h-1zM396,519h1v16h-1zM397,508h1v12h-1zM398,502h1v7h-1zM399,502h1v5h-1zM400,506h1v3h-1zM401,507h1v2h-1zM402,507h1v4h-1zM403,510h1v8h-1zM404,517h1v13h-1zM405,529h1v8h-1zM406,536h1v9h-1zM407,535h1v10h-1zM408,526h1v10h-1zM409,505h1v22h-1zM410,500h1v6h-1zM411,496h1v5h-1zM412,493h1v4h-1zM413,493h1v1h-1zM414,492h1v2h-1zM415,492h1v5h-1zM416,496h1v10h-1zM417,505h1v13h-1zM418,517h1v12h-1zM419,528h1v13h-1zM420,540h1v5h-1zM421,544h1v1h-1zM422,544h1v1h-1zM423,544h1v1h-1zM424,544h1v1h-1zM425,544h1v1h-1zM426,544h1v1h-1zM427,544h1v1h-1zM428,544h1v1h-1zM429,544h1v1h-1zM430,544h1v1h-1zM431,544h1v1h-1zM432,544h1v1h-1zM433,544h1v1h-1zM434,544h1v17h-1zM435,560h1v19h-1zM436,578h1v6h-1zM437,578h1v6h-1zM438,577h1v2h-1zM439,577h1v2h-1zM440,578h1v1h-1zM441,572h1v7h-1zM442,565h1v8h-1zM443,557h1v9h-1zM444,545h1v13h-1zM445,544h1v2h-1zM446,544h1v18h-1zM447,561h1v20h-1zM448,580h1v12h-1zM449,589h1v3h-1zM450,589h1v5h-1zM451,593h1v1h-1zM452,590h1v4h-1zM453,582h1v9h-1zM454,574h1v9h-1zM455,564h1v11h-1zM456,550h1v15h-1zM457,544h1v7h-1zM458,544h1v1h-1zM459,544h1v1h-1zM460,544h1v1h-1zM461,544h1v1h-1zM462,544h1v1h-1zM463,544h1v1h-1zM464,544h1v1h-1zM465,544h1v1h-1zM466,544h1v1h-1zM467,544h1v1h-1zM468,544h1v1h-1zM469,544h1v1h-1zM470,544h1v1h-1zM471,544h1v1h-1zM472,528h1v17h-1zM473,515h1v14h-1zM474,504h1v12h-1zM475,503h1v2h-1zM476,503h1v7h-1zM477,508h1v2h-1zM478,507h1v2h-1zM479,507h1v5h-1zM480,511h1v12h-1zM481,522h1v11h-1zM482,532h1v8h-1zM483,539h1v2h-1zM484,532h1v9h-1zM485,517h1v16h-1zM486,503h1v15h-1zM487,498h1v6h-1zM488,494h1v5h-1zM489,492h1v3h-1zM490,492h1v5h-1zM491,492h1v5h-1zM492,492h1v7h-1zM493,498h1v13h-1zM494,510h1v12h-1zM495,521h1v13h-1zM496,533h1v12h-1zM497,544h1v1h-1zM498,544h1v1h-1zM499,544h1v1h-1zM500,544h1v1h-1zM501,544h1v1h-1zM502,544h1v1h-1zM503,544h1v1h-1zM504,544h1v1h-1zM505,544h1v1h-1zM506,544h1v1h-1zM507,544h1v1h-1zM508,544h1v1h-1zM509,544h1v1h-1zM510,544h1v4h-1zM511,547h1v24h-1zM512,570h1v11h-1zM513,580h1v2h-1zM514,577h1v5h-1zM515,577h1v1h-1zM516,577h1v3h-1zM517,577h1v3h-1zM518,568h1v10h-1zM519,562h1v7h-1zM520,553h1v10h-1zM521,545h1v9h-1zM522,545h1v4h-1zM523,548h1v22h-1zM524,569h1v20h-1zM525,588h1v3h-1zM526,590h1v2h-1zM527,591h1v3h-1zM528,593h1v2h-1zM529,586h1v9h-1zM530,579h1v8h-1zM531,570h1v10h-1zM532,560h1v11h-1zM533,544h1v17h-1zM534,544h1v1h-1zM535,544h1v1h-1zM536,544h1v1h-1zM537,544h1v1h-1zM538,544h1v1h-1zM539,544h1v1h-1zM540,544h1v1h-1zM541,544h1v1h-1zM542,544h1v1h-1zM543,544h1v1h-1zM544,544h1v1h-1zM545,544h1v1h-1zM546,544h1v1h-1z" fill="#fff" shape-rendering="crispEdges"/><path d="M89,513h1v2h-1zM90,513h1v2h-1zM91,513h1v3h-1zM92,514h1v3h-1zM93,514h1v3h-1zM94,514h1v2h-1zM95,514h1v2h-1zM96,514h1v2h-1zM97,513h1v3h-1zM98,512h1v3h-1zM99,512h1v2h-1zM100,512h1v3h-1zM101,513h1v2h-1zM102,513h1v2h-1zM103,513h1v3h-1zM104,514h1v3h-1zM105,515h1v2h-1zM106,514h1v3h-1zM107,514h1v2h-1zM108,513h1v3h-1zM109,513h1v2h-1zM110,512h1v3h-1zM111,512h1v2h-1zM112,512h1v3h-1zM113,513h1v2h-1zM114,513h1v3h-1zM115,514h1v2h-1zM116,514h1v2h-1zM117,514h1v2h-1zM118,514h1v3h-1zM119,513h1v4h-1zM120,512h1v3h-1zM121,512h1v3h-1zM122,513h1v2h-1zM123,513h1v2h-1zM124,513h1v2h-1zM125,513h1v3h-1zM126,514h1v3h-1zM127,515h1v2h-1zM128,514h1v3h-1zM129,514h1v2h-1zM130,514h1v2h-1zM131,513h1v3h-1zM132,513h1v2h-1zM133,512h1v3h-1zM134,512h1v2h-1zM135,512h1v3h-1zM136,513h1v3h-1zM137,514h1v2h-1zM138,514h1v2h-1zM139,514h1v3h-1zM140,515h1v2h-1zM141,514h1v3h-1zM142,513h1v3h-1zM143,513h1v2h-1zM144,513h1v2h-1zM145,512h1v3h-1zM146,512h1v2h-1zM147,512h1v3h-1zM148,513h1v3h-1zM149,514h1v2h-1zM150,514h1v2h-1zM151,514h1v2h-1zM152,514h1v3h-1zM153,514h1v3h-1zM154,513h1v3h-1zM155,513h1v2h-1zM156,512h1v3h-1zM157,512h1v3h-1zM158,513h1v2h-1zM159,513h1v2h-1zM160,513h1v3h-1zM161,514h1v2h-1zM162,514h1v3h-1zM163,514h1v3h-1zM164,514h1v2h-1zM165,513h1v3h-1zM166,513h1v2h-1zM167,512h1v3h-1zM168,512h1v2h-1zM169,512h1v3h-1zM170,513h1v3h-1zM171,514h1v2h-1zM172,514h1v2h-1zM173,514h1v2h-1zM174,514h1v3h-1zM175,514h1v3h-1zM176,513h1v3h-1zM177,513h1v2h-1zM178,513h1v2h-1zM179,513h1v2h-1zM180,512h1v3h-1zM181,512h1v3h-1zM182,513h1v3h-1zM183,514h1v2h-1zM184,514h1v3h-1zM185,514h1v3h-1zM186,514h1v2h-1zM187,514h1v2h-1zM188,514h1v2h-1zM189,513h1v3h-1zM190,512h1v3h-1zM191,512h1v3h-1zM192,513h1v2h-1zM193,513h1v2h-1zM194,513h1v3h-1zM195,514h1v2h-1zM196,514h1v3h-1zM197,514h1v3h-1zM198,514h1v2h-1zM199,513h1v3h-1zM200,513h1v2h-1zM201,513h1v2h-1zM202,512h1v3h-1zM203,512h1v3h-1zM204,513h1v2h-1zM205,513h1v3h-1zM206,514h1v2h-1zM207,514h1v2h-1zM208,514h1v3h-1zM209,514h1v3h-1zM210,514h1v2h-1zM211,513h1v3h-1zM212,512h1v3h-1zM213,512h1v3h-1zM214,513h1v2h-1zM215,513h1v2h-1zM216,513h1v2h-1zM217,513h1v3h-1zM218,514h1v3h-1zM219,515h1v2h-1zM220,514h1v3h-1zM221,514h1v2h-1zM222,514h1v2h-1zM223,513h1v3h-1zM224,512h1v3h-1zM225,512h1v2h-1zM226,512h1v3h-1zM227,513h1v2h-1zM228,513h1v3h-1zM229,514h1v2h-1zM230,514h1v3h-1zM231,515h1v2h-1zM232,514h1v3h-1zM233,514h1v2h-1zM234,513h1v3h-1zM235,513h1v2h-1zM236,513h1v2h-1zM237,513h1v2h-1zM238,512h1v3h-1zM239,512h1v4h-1zM240,514h1v3h-1zM241,514h1v3h-1zM242,514h1v2h-1zM243,514h1v2h-1zM244,514h1v2h-1zM245,513h1v3h-1zM246,512h1v3h-1zM247,512h1v2h-1zM248,512h1v3h-1zM249,513h1v2h-1zM250,513h1v2h-1zM251,513h1v3h-1zM252,514h1v3h-1zM253,515h1v2h-1zM254,515h1v2h-1zM255,514h1v3h-1zM256,513h1v3h-1zM257,513h1v2h-1zM258,513h1v2h-1zM259,512h1v3h-1zM260,512h1v2h-1zM261,512h1v3h-1zM262,513h1v3h-1zM263,514h1v2h-1zM264,514h1v2h-1zM265,514h1v3h-1zM266,515h1v2h-1zM267,514h1v3h-1zM268,513h1v3h-1zM269,513h1v2h-1zM270,513h1v2h-1zM271,513h1v2h-1zM272,512h1v3h-1zM273,512h1v3h-1zM274,513h1v3h-1zM275,514h1v2h-1zM276,514h1v3h-1zM277,514h1v3h-1zM278,514h1v2h-1zM279,514h1v2h-1zM280,513h1v3h-1zM281,512h1v3h-1zM282,512h1v2h-1zM283,512h1v3h-1zM284,513h1v2h-1zM285,513h1v3h-1zM286,514h1v2h-1zM287,514h1v3h-1zM288,515h1v2h-1zM289,514h1v3h-1zM290,513h1v3h-1zM291,513h1v2h-1zM292,513h1v2h-1zM293,512h1v3h-1zM294,512h1v2h-1zM295,512h1v3h-1zM296,513h1v3h-1zM297,514h1v2h-1zM298,514h1v2h-1zM299,514h1v2h-1zM300,514h1v3h-1zM301,514h1v3h-1zM302,513h1v3h-1zM303,513h1v2h-1zM304,512h1v3h-1zM305,512h1v3h-1zM306,513h1v2h-1zM307,513h1v2h-1zM308,513h1v3h-1zM309,514h1v2h-1zM310,514h1v3h-1zM311,514h1v3h-1zM312,514h1v2h-1zM313,514h1v2h-1zM314,513h1v3h-1zM315,513h1v2h-1zM316,512h1v3h-1zM317,512h1v3h-1zM318,513h1v2h-1zM319,513h1v3h-1zM320,514h1v2h-1zM321,514h1v2h-1zM322,514h1v3h-1zM323,514h1v3h-1zM324,514h1v2h-1zM325,513h1v3h-1zM326,513h1v2h-1zM327,513h1v2h-1zM328,512h1v3h-1zM329,512h1v3h-1zM330,513h1v2h-1zM331,513h1v3h-1zM332,514h1v3h-1zM333,514h1v3h-1zM334,514h1v2h-1zM335,514h1v2h-1zM336,514h1v2h-1zM337,513h1v3h-1zM338,512h1v3h-1zM339,512h1v2h-1zM340,512h1v3h-1zM341,513h1v2h-1zM342,513h1v2h-1zM343,513h1v3h-1zM344,514h1v3h-1zM345,515h1v2h-1zM346,514h1v3h-1zM347,514h1v2h-1zM348,513h1v3h-1zM349,513h1v2h-1zM350,512h1v3h-1zM351,512h1v2h-1zM352,512h1v3h-1zM353,513h1v2h-1zM354,513h1v3h-1zM355,514h1v2h-1zM356,514h1v2h-1zM357,514h1v2h-1zM358,514h1v2h-1zM359,513h1v3h-1zM360,512h1v3h-1zM361,512h1v3h-1zM362,513h1v2h-1zM363,513h1v2h-1zM364,513h1v2h-1zM365,513h1v3h-1zM366,514h1v3h-1zM367,515h1v2h-1zM368,514h1v3h-1zM369,514h1v2h-1zM370,514h1v2h-1zM371,513h1v3h-1zM372,512h1v3h-1zM373,512h1v2h-1zM374,512h1v3h-1zM375,513h1v2h-1zM376,513h1v3h-1zM377,514h1v2h-1zM378,514h1v2h-1zM379,514h1v3h-1zM380,515h1v2h-1zM381,514h1v3h-1zM382,513h1v3h-1zM383,513h1v2h-1zM384,513h1v2h-1zM385,512h1v3h-1zM386,512h1v2h-1zM387,512h1v3h-1zM388,513h1v3h-1zM389,514h1v2h-1zM390,514h1v2h-1zM391,514h1v2h-1zM392,514h1v3h-1zM393,514h1v3h-1zM394,513h1v3h-1zM395,513h1v2h-1zM396,513h1v2h-1zM397,513h1v2h-1zM398,513h1v2h-1zM399,513h1v3h-1zM400,514h1v2h-1zM401,514h1v3h-1zM402,515h1v2h-1zM403,514h1v3h-1zM404,514h1v2h-1zM405,513h1v3h-1zM406,513h1v2h-1zM407,512h1v3h-1zM408,512h1v2h-1zM409,512h1v3h-1zM410,513h1v3h-1zM411,514h1v2h-1zM412,514h1v2h-1zM413,514h1v3h-1zM414,515h1v2h-1zM415,514h1v3h-1zM416,513h1v3h-1zM417,513h1v2h-1zM418,513h1v2h-1zM419,513h1v2h-1zM420,512h1v3h-1zM421,512h1v3h-1zM422,513h1v3h-1zM423,514h1v2h-1zM424,514h1v3h-1zM425,514h1v3h-1zM426,514h1v2h-1zM427,514h1v2h-1zM428,513h1v3h-1zM429,513h1v2h-1zM430,512h1v3h-1zM431,512h1v3h-1zM432,513h1v2h-1zM433,513h1v2h-1zM434,513h1v3h-1zM435,514h1v2h-1zM436,514h1v3h-1zM437,514h1v3h-1zM438,514h1v2h-1zM439,513h1v3h-1zM440,513h1v2h-1zM441,513h1v2h-1zM442,512h1v3h-1zM443,512h1v3h-1zM444,513h1v2h-1zM445,513h1v3h-1zM446,514h1v2h-1zM447,514h1v2h-1zM448,514h1v3h-1zM449,514h1v3h-1zM450,514h1v2h-1zM451,513h1v3h-1zM452,512h1v3h-1zM453,512h1v3h-1zM454,513h1v2h-1zM455,513h1v2h-1zM456,513h1v2h-1zM457,513h1v3h-1zM458,514h1v3h-1zM459,515h1v2h-1zM460,514h1v3h-1zM461,514h1v2h-1zM462,514h1v2h-1zM463,513h1v3h-1zM464,512h1v3h-1zM465,512h1v2h-1zM466,512h1v3h-1zM467,513h1v2h-1zM468,513h1v3h-1zM469,514h1v2h-1zM470,514h1v3h-1zM471,514h1v3h-1zM472,514h1v2h-1zM473,513h1v3h-1zM474,513h1v2h-1zM475,513h1v2h-1zM476,512h1v3h-1zM477,512h1v3h-1zM478,513h1v2h-1zM479,513h1v3h-1zM480,514h1v3h-1zM481,514h1v3h-1zM482,514h1v2h-1zM483,514h1v2h-1zM484,514h1v2h-1zM485,513h1v3h-1zM486,512h1v3h-1zM487,512h1v2h-1zM488,512h1v3h-1zM489,513h1v2h-1zM490,513h1v2h-1zM491,513h1v3h-1zM492,514h1v3h-1zM493,515h1v2h-1zM494,514h1v3h-1zM495,514h1v2h-1zM496,514h1v2h-1zM497,513h1v3h-1zM498,512h1v3h-1zM499,512h1v2h-1zM500,512h1v2h-1zM501,512h1v3h-1zM502,513h1v3h-1zM503,514h1v2h-1zM504,514h1v2h-1zM505,514h1v3h-1zM506,515h1v2h-1zM507,514h1v3h-1zM508,513h1v3h-1zM509,513h1v2h-1zM510,513h1v2h-1zM511,513h1v2h-1zM512,512h1v3h-1zM513,512h1v3h-1zM514,513h1v4h-1zM515,514h1v3h-1zM516,514h1v2h-1zM517,514h1v2h-1zM518,514h1v2h-1zM519,513h1v3h-1zM520,513h1v2h-1zM521,512h1v3h-1zM522,512h1v2h-1zM523,512h1v3h-1zM524,513h1v2h-1zM525,513h1v3h-1zM526,514h1v2h-1zM527,514h1v3h-1zM528,515h1v2h-1zM529,514h1v3h-1zM530,513h1v3h-1zM531,513h1v2h-1zM532,513h1v2h-1zM533,512h1v3h-1zM534,512h1v2h-1zM535,512h1v3h-1zM536,513h1v3h-1zM537,514h1v2h-1zM538,514h1v2h-1zM539,514h1v2h-1zM540,514h1v3h-1zM541,514h1v3h-1zM542,513h1v3h-1zM543,513h1v2h-1zM544,512h1v3h-1zM545,512h1v3h-1zM546,513h1v2h-1z" fill="#22e822" shape-rendering="crispEdges"/></g></svg>
<div style="left:52.800000000000004px;top:148.25px;font-size:14px;line-height:14px;color:#111;white-space:nowrap;letter-spacing:0.2px;">30</div>
<div style="left:52.800000000000004px;top:188.25px;font-size:14px;line-height:14px;color:#111;white-space:nowrap;letter-spacing:0.2px;">20</div>
<div style="left:52.800000000000004px;top:227.75px;font-size:14px;line-height:14px;color:#111;white-space:nowrap;letter-spacing:0.2px;">10</div>
<div style="left:61.800000000000004px;top:267.25px;font-size:14px;line-height:14px;color:#111;white-space:nowrap;letter-spacing:0.2px;">0</div>
<div style="left:52.800000000000004px;top:306.25px;font-size:14px;line-height:14px;color:#111;white-space:nowrap;letter-spacing:0.2px;">&minus;10</div>
<div style="left:52.800000000000004px;top:345.75px;font-size:14px;line-height:14px;color:#111;white-space:nowrap;letter-spacing:0.2px;">&minus;20</div>
<div style="left:52.800000000000004px;top:385.25px;font-size:14px;line-height:14px;color:#111;white-space:nowrap;letter-spacing:0.2px;">&minus;30</div>
<div style="left:61.2px;top:427.25px;font-size:14px;line-height:14px;color:#111;white-space:nowrap;letter-spacing:0.2px;">3</div>
<div style="left:61.2px;top:464.95px;font-size:14px;line-height:14px;color:#111;white-space:nowrap;letter-spacing:0.2px;">2</div>
<div style="left:61.2px;top:501.65px;font-size:14px;line-height:14px;color:#111;white-space:nowrap;letter-spacing:0.2px;">1</div>
<div style="left:61.2px;top:538.25px;font-size:14px;line-height:14px;color:#111;white-space:nowrap;letter-spacing:0.2px;">0</div>
<div style="left:52.2px;top:575.65px;font-size:14px;line-height:14px;color:#111;white-space:nowrap;letter-spacing:0.2px;">&minus;1</div>
<div style="left:52.2px;top:613.05px;font-size:14px;line-height:14px;color:#111;white-space:nowrap;letter-spacing:0.2px;">&minus;2</div>
<div style="left:52.2px;top:650.15px;font-size:14px;line-height:14px;color:#111;white-space:nowrap;letter-spacing:0.2px;">&minus;3</div>
<div style="left:89px;top:394px;width:1px;height:4px;background:#222;"></div>
<div style="left:89px;top:658px;width:1px;height:4px;background:#222;"></div>
<div style="left:49.0px;top:400.00px;font-size:13px;line-height:13px;color:#111;white-space:nowrap;letter-spacing:-0.9px;width:80px;text-align:center;">0</div>
<div style="left:49.0px;top:664.00px;font-size:13px;line-height:13px;color:#111;white-space:nowrap;letter-spacing:-0.9px;width:80px;text-align:center;">0</div>
<div style="left:181px;top:394px;width:1px;height:4px;background:#222;"></div>
<div style="left:181px;top:658px;width:1px;height:4px;background:#222;"></div>
<div style="left:141.05px;top:400.00px;font-size:13px;line-height:13px;color:#111;white-space:nowrap;letter-spacing:-0.9px;width:80px;text-align:center;">0.02</div>
<div style="left:141.05px;top:664.00px;font-size:13px;line-height:13px;color:#111;white-space:nowrap;letter-spacing:-0.9px;width:80px;text-align:center;">0.02</div>
<div style="left:273px;top:394px;width:1px;height:4px;background:#222;"></div>
<div style="left:273px;top:658px;width:1px;height:4px;background:#222;"></div>
<div style="left:233.10000000000002px;top:400.00px;font-size:13px;line-height:13px;color:#111;white-space:nowrap;letter-spacing:-0.9px;width:80px;text-align:center;">0.04</div>
<div style="left:233.10000000000002px;top:664.00px;font-size:13px;line-height:13px;color:#111;white-space:nowrap;letter-spacing:-0.9px;width:80px;text-align:center;">0.04</div>
<div style="left:365px;top:394px;width:1px;height:4px;background:#222;"></div>
<div style="left:365px;top:658px;width:1px;height:4px;background:#222;"></div>
<div style="left:325.15px;top:400.00px;font-size:13px;line-height:13px;color:#111;white-space:nowrap;letter-spacing:-0.9px;width:80px;text-align:center;">0.06</div>
<div style="left:325.15px;top:664.00px;font-size:13px;line-height:13px;color:#111;white-space:nowrap;letter-spacing:-0.9px;width:80px;text-align:center;">0.06</div>
<div style="left:457px;top:394px;width:1px;height:4px;background:#222;"></div>
<div style="left:457px;top:658px;width:1px;height:4px;background:#222;"></div>
<div style="left:417.2px;top:400.00px;font-size:13px;line-height:13px;color:#111;white-space:nowrap;letter-spacing:-0.9px;width:80px;text-align:center;">0.08</div>
<div style="left:417.2px;top:664.00px;font-size:13px;line-height:13px;color:#111;white-space:nowrap;letter-spacing:-0.9px;width:80px;text-align:center;">0.08</div>
<div style="left:546px;top:394px;width:1px;height:4px;background:#222;"></div>
<div style="left:546px;top:658px;width:1px;height:4px;background:#222;"></div>
<div style="left:529px;top:400.00px;font-size:13px;line-height:13px;color:#111;white-space:nowrap;letter-spacing:-1.05px;">0.0994</div>
<div style="left:529px;top:664.00px;font-size:13px;line-height:13px;color:#111;white-space:nowrap;letter-spacing:-1.05px;width:28px;overflow:hidden;">0.099</div>
<div style="left:24.5px;top:265.5px;width:32px;height:14px;letter-spacing:0.2px;font-size:13px;line-height:14px;font-weight:bold;color:#0b1630;transform:rotate(-90deg);text-align:center;">Volts</div>
<div style="left:23.5px;top:537px;width:34px;height:14px;font-size:13px;line-height:14px;font-weight:bold;color:#0b1630;transform:rotate(-90deg);text-align:center;">Amps</div>
<div style="left:468px;top:154px;width:79px;height:73px;background:#b3b3b3;border-top:1px solid #e6e6e6;border-left:1px solid #e6e6e6;box-sizing:border-box;"></div>
<svg style="left:460px;top:144px" width="100" height="100"><circle cx="16.9" cy="23.5" r="4.9" fill="#fff" stroke="#000" stroke-width="1.2"/><circle cx="16.9" cy="23.5" r="2.5" fill="#000"/><rect x="59.3" y="14.3" width="23" height="18.5" fill="#000" stroke="#e0e0e0" stroke-width="1"/><path d="M61.20,27.90 L69.50,17.20 L77.50,27.30 L80.70,23.30" stroke="#fff" fill="none" stroke-width="1.1"/><circle cx="16.9" cy="44.1" r="4.9" fill="#fff" stroke="#000" stroke-width="1.2"/><circle cx="16.9" cy="44.1" r="2.5" fill="#000"/><rect x="59.3" y="37.1" width="23" height="18.5" fill="#000" stroke="#e0e0e0" stroke-width="1"/><path d="M61.20,50.90 L71.30,40.40 L80.70,49.80" stroke="#ff4040" fill="none" stroke-width="1.1"/><circle cx="16.9" cy="64.7" r="4.9" fill="#fff" stroke="#000" stroke-width="1.2"/><circle cx="16.9" cy="64.7" r="2.5" fill="#000"/><rect x="59.3" y="60.2" width="23" height="18.5" fill="#000" stroke="#e0e0e0" stroke-width="1"/><path d="M61.20,73.50 L69.50,63.20 L77.50,73.50 L80.70,69.10" stroke="#19e019" fill="none" stroke-width="1.1"/></svg>
<div style="left:486px;top:161.52px;font-size:12.5px;line-height:12.5px;color:#111;white-space:nowrap;letter-spacing:-1.4px;">V1</div>
<div style="left:486px;top:184.02px;font-size:12.5px;line-height:12.5px;color:#111;white-space:nowrap;letter-spacing:-1.4px;">V2</div>
<div style="left:486px;top:207.32px;font-size:12.5px;line-height:12.5px;color:#111;white-space:nowrap;letter-spacing:-1.4px;">V3</div>
<div style="left:468px;top:433px;width:79px;height:73px;background:#b3b3b3;border-top:1px solid #e6e6e6;border-left:1px solid #e6e6e6;box-sizing:border-box;"></div>
<svg style="left:460px;top:423px" width="100" height="100"><circle cx="16.9" cy="23.5" r="4.9" fill="#fff" stroke="#000" stroke-width="1.2"/><circle cx="16.9" cy="23.5" r="2.5" fill="#000"/><rect x="59.3" y="14.3" width="23" height="18.5" fill="#000" stroke="#e0e0e0" stroke-width="1"/><path d="M61.20,27.90 L69.50,17.20 L77.50,27.30 L80.70,23.30" stroke="#fff" fill="none" stroke-width="1.1"/><circle cx="16.9" cy="44.1" r="4.9" fill="#fff" stroke="#000" stroke-width="1.2"/><circle cx="16.9" cy="44.1" r="2.5" fill="#000"/><rect x="59.3" y="37.1" width="23" height="18.5" fill="#000" stroke="#e0e0e0" stroke-width="1"/><path d="M61.20,50.90 L71.30,40.40 L80.70,49.80" stroke="#ff4040" fill="none" stroke-width="1.1"/><circle cx="16.9" cy="64.7" r="4.9" fill="#fff" stroke="#000" stroke-width="1.2"/><circle cx="16.9" cy="64.7" r="2.5" fill="#000"/><rect x="59.3" y="60.2" width="23" height="18.5" fill="#000" stroke="#e0e0e0" stroke-width="1"/><path d="M61.20,73.50 L69.50,63.20 L77.50,73.50 L80.70,69.10" stroke="#19e019" fill="none" stroke-width="1.1"/></svg>
<div style="left:486px;top:440.42px;font-size:12.5px;line-height:12.5px;color:#111;white-space:nowrap;letter-spacing:-1.4px;">A1</div>
<div style="left:486px;top:463.02px;font-size:12.5px;line-height:12.5px;color:#111;white-space:nowrap;letter-spacing:-1.4px;">A2</div>
<div style="left:486px;top:486.32px;font-size:12.5px;line-height:12.5px;color:#111;white-space:nowrap;letter-spacing:-1.4px;">A3</div>
<svg style="left:555px;top:144px" width="20" height="259"><polygon points="4,5 9.5,-1 15,5" fill="#8a8a8a"/><rect x="3" y="5" width="13" height="1.5" fill="#d0d0d0"/><polygon points="4,250.5 9.5,257 15,250.5" fill="#8a8a8a"/><path d="M9.5,257 L15.5,250" stroke="#555" stroke-width="0.8"/></svg>
<div style="left:559px;top:152px;width:9px;height:239px;background:#363636;"></div>
<div style="left:568px;top:152px;width:2px;height:239px;background:#a4a4a4;"></div>
<div style="left:559px;top:391px;width:11px;height:3px;background:#c0c0c0;"></div>
<svg style="left:544px;top:260.8px" width="34" height="18"><polygon points="1.5,9 32,0.8 32,17" fill="#2f8cf0"/><polygon points="1.5,9 32,0.8 32,3" fill="#7fb8f5"/></svg>
<svg style="left:555px;top:423px" width="20" height="244"><polygon points="4,7 9.5,1 15,7" fill="#a0a0a0"/><rect x="3" y="7" width="13" height="1.5" fill="#d0d0d0"/><polygon points="4,235.5 9.5,242 15,235.5" fill="#a0a0a0"/><path d="M9.5,242 L15.5,235" stroke="#555" stroke-width="0.8"/></svg>
<div style="left:559px;top:433px;width:9px;height:222px;background:#7c7c7c;"></div>
<div style="left:568px;top:433px;width:2px;height:222px;background:#a4a4a4;"></div>
<div style="left:559px;top:655px;width:11px;height:3px;background:#c0c0c0;"></div>
<svg style="left:544px;top:535.5px" width="34" height="18"><polygon points="1.5,9 32,0.8 32,17" fill="#6fa3d8"/><polygon points="1.5,9 32,0.8 32,3" fill="#7fb8f5"/></svg>
<div style="left:578px;top:149.14px;font-size:12px;line-height:12px;color:#0e0e0e;white-space:nowrap;font-weight:bold;letter-spacing:-0.15px;">V Trigger</div>
<div style="left:574px;top:428px;width:60px;height:16px;background:#b7b7b7;"></div>
<div style="left:575.5px;top:430.34px;font-size:12px;line-height:12px;color:#7e7e7e;white-space:nowrap;font-weight:bold;letter-spacing:-0.15px;">I Trigger</div>
<div style="left:588px;top:173.84px;font-size:12px;line-height:12px;color:#0e0e0e;white-space:nowrap;font-weight:bold;letter-spacing:-0.1px;">Voltage</div>
<div style="left:589px;top:188.34px;font-size:12px;line-height:12px;color:#0e0e0e;white-space:nowrap;font-weight:bold;letter-spacing:-0.1px;">Range</div>
<div style="left:586px;top:456.34px;font-size:12px;line-height:12px;color:#0e0e0e;white-space:nowrap;font-weight:bold;letter-spacing:-0.1px;">Current</div>
<div style="left:586px;top:471.34px;font-size:12px;line-height:12px;color:#0e0e0e;white-space:nowrap;font-weight:bold;letter-spacing:-0.1px;">Range</div>
<svg style="left:608px;top:206px" width="29" height="109.5"><polygon points="3,7 14.5,1 26,7" fill="#8c8c8c"/><rect x="3" y="6" width="23" height="1" fill="#e4e4e4"/><polygon points="3,100.5 14.5,106.5 26,100.5" fill="#8c8c8c"/><rect x="3" y="99.5" width="23" height="1" fill="#e4e4e4"/></svg>
<div style="left:610px;top:214px;width:25px;height:91.5px;box-sizing:border-box;border:1px solid;border-color:#6e6e6e #e4e4e4 #e4e4e4 #6e6e6e;background:linear-gradient(#bcbcbc 0,#bcbcbc 63.5px,#9a9a9a 63.5px);"></div>
<div style="left:608px;top:272.0px;width:29px;height:11px;background:#000;"></div>
<div style="left:611px;top:276.5px;width:23px;height:1px;background:#8a8a8a;"></div>
<div style="left:570.5px;top:209.10px;font-size:13px;line-height:13px;color:#111;white-space:nowrap;letter-spacing:-0.2px;width:30px;text-align:right;">100</div>
<div style="left:570.5px;top:231.10px;font-size:13px;line-height:13px;color:#111;white-space:nowrap;letter-spacing:-0.2px;width:30px;text-align:right;">75</div>
<div style="left:570.5px;top:253.10px;font-size:13px;line-height:13px;color:#111;white-space:nowrap;letter-spacing:-0.2px;width:30px;text-align:right;">50</div>
<div style="left:570.5px;top:275.60px;font-size:13px;line-height:13px;color:#111;white-space:nowrap;letter-spacing:-0.2px;width:30px;text-align:right;">25</div>
<div style="left:570.5px;top:297.60px;font-size:13px;line-height:13px;color:#111;white-space:nowrap;letter-spacing:-0.2px;width:30px;text-align:right;">0</div>
<svg style="left:606px;top:487.5px" width="29" height="116.5"><polygon points="3,7 14.5,1 26,7" fill="#8c8c8c"/><rect x="3" y="6" width="23" height="1" fill="#e4e4e4"/><polygon points="3,107.5 14.5,113.5 26,107.5" fill="#8c8c8c"/><rect x="3" y="106.5" width="23" height="1" fill="#e4e4e4"/></svg>
<div style="left:608px;top:495.5px;width:25px;height:98.5px;box-sizing:border-box;border:1px solid;border-color:#6e6e6e #e4e4e4 #e4e4e4 #6e6e6e;background:linear-gradient(#bcbcbc 0,#bcbcbc 91.5px,#9a9a9a 91.5px);"></div>
<div style="left:606px;top:581.5px;width:29px;height:11px;background:#000;"></div>
<div style="left:609px;top:586px;width:23px;height:1px;background:#8a8a8a;"></div>
<div style="left:567.5px;top:490.60px;font-size:13px;line-height:13px;color:#111;white-space:nowrap;letter-spacing:-0.2px;width:30px;text-align:right;">50</div>
<div style="left:567.5px;top:510.10px;font-size:13px;line-height:13px;color:#111;white-space:nowrap;letter-spacing:-0.2px;width:30px;text-align:right;">40</div>
<div style="left:567.5px;top:529.60px;font-size:13px;line-height:13px;color:#111;white-space:nowrap;letter-spacing:-0.2px;width:30px;text-align:right;">30</div>
<div style="left:567.5px;top:549.10px;font-size:13px;line-height:13px;color:#111;white-space:nowrap;letter-spacing:-0.2px;width:30px;text-align:right;">20</div>
<div style="left:567.5px;top:568.60px;font-size:13px;line-height:13px;color:#111;white-space:nowrap;letter-spacing:-0.2px;width:30px;text-align:right;">10</div>
<div style="left:567.5px;top:587.60px;font-size:13px;line-height:13px;color:#111;white-space:nowrap;letter-spacing:-0.2px;width:30px;text-align:right;">0</div>
<div style="left:580px;top:330.34px;font-size:12px;line-height:12px;color:#0e0e0e;white-space:nowrap;font-weight:bold;letter-spacing:-0.1px;">Subtract</div>
<div style="left:580px;top:344.34px;font-size:12px;line-height:12px;color:#0e0e0e;white-space:nowrap;font-weight:bold;letter-spacing:-0.1px;">Zero Seq</div>
<div style="left:579px;top:365px;width:64px;height:24px;box-sizing:border-box;border:1px solid #000;"></div>
<div style="left:580px;top:366px;width:62px;height:22px;box-sizing:border-box;border:2px solid;border-color:#e6e6e6 #6a6a6a #6a6a6a #e6e6e6;background:#b3b3b3;"></div>
<div style="left:579px;top:371.84px;font-size:12px;line-height:12px;color:#0e0e0e;white-space:nowrap;font-weight:bold;width:63px;text-align:center;">OFF</div>
<div style="left:584px;top:622px;width:53px;height:35px;box-sizing:border-box;border:1px solid #000;"></div>
<div style="left:585px;top:623px;width:51px;height:33px;box-sizing:border-box;border:2px solid;border-color:#e6e6e6 #6a6a6a #6a6a6a #e6e6e6;background:#b3b3b3;"></div>
<div style="left:584px;top:628.34px;font-size:12px;line-height:12px;color:#0e0e0e;white-space:nowrap;font-weight:bold;width:53px;text-align:center;">Zero</div>
<div style="left:584px;top:641.34px;font-size:12px;line-height:12px;color:#0e0e0e;white-space:nowrap;font-weight:bold;width:53px;text-align:center;">Amps</div>
<div style="left:662px;top:111px;width:361px;height:1px;background:#e0e0e0;"></div>
<div style="left:662px;top:111px;width:1px;height:363px;background:#e0e0e0;"></div>
<div style="left:664px;top:113px;width:359px;height:1px;background:#5c5c5c;"></div>
<div style="left:664px;top:113px;width:1px;height:361px;background:#5c5c5c;"></div>
<div style="left:664px;top:473px;width:359px;height:1px;background:#e0e0e0;"></div>
<div style="left:1022px;top:113px;width:1px;height:361px;background:#e0e0e0;"></div>
<div style="left:662px;top:475px;width:363px;height:1px;background:#5c5c5c;"></div>
<div style="left:1024px;top:111px;width:1px;height:365px;background:#5c5c5c;"></div>
<div style="left:662px;top:478px;width:361px;height:1px;background:#e0e0e0;"></div>
<div style="left:662px;top:478px;width:1px;height:209px;background:#e0e0e0;"></div>
<div style="left:664px;top:480px;width:359px;height:1px;background:#5c5c5c;"></div>
<div style="left:664px;top:480px;width:1px;height:207px;background:#5c5c5c;"></div>
<div style="left:664px;top:686px;width:359px;height:1px;background:#e0e0e0;"></div>
<div style="left:1022px;top:480px;width:1px;height:207px;background:#e0e0e0;"></div>
<div style="left:662px;top:688px;width:363px;height:1px;background:#5c5c5c;"></div>
<div style="left:1024px;top:478px;width:1px;height:211px;background:#5c5c5c;"></div>
<div style="left:9px;top:693px;width:1014px;height:1px;background:#e0e0e0;"></div>
<div style="left:9px;top:693px;width:1px;height:72px;background:#e0e0e0;"></div>
<div style="left:11px;top:695px;width:1012px;height:1px;background:#5c5c5c;"></div>
<div style="left:11px;top:695px;width:1px;height:70px;background:#5c5c5c;"></div>
<div style="left:11px;top:764px;width:1012px;height:1px;background:#e0e0e0;"></div>
<div style="left:1022px;top:695px;width:1px;height:70px;background:#e0e0e0;"></div>
<div style="left:9px;top:766px;width:1016px;height:1px;background:#5c5c5c;"></div>
<div style="left:1024px;top:693px;width:1px;height:74px;background:#5c5c5c;"></div>
<div style="left:701.5px;top:124.65px;font-size:15.3px;line-height:15.3px;color:#0e0e0e;white-space:nowrap;font-weight:bold;letter-spacing:0.22px;">Electrical Measurements</div>
<div style="left:683px;top:164.84px;font-size:12px;line-height:12px;color:#0e0e0e;white-space:nowrap;font-weight:bold;letter-spacing:-0.7px;text-decoration:underline;text-decoration-skip-ink:none;text-decoration-thickness:1px;text-underline-offset:1px;">Ch1 Trigger Source</div>
<div style="left:683px;top:184.84px;font-size:12px;line-height:12px;color:#0e0e0e;white-space:nowrap;font-weight:bold;letter-spacing:-0.7px;">Amps</div>
<div style="left:761px;top:183.54px;font-size:12px;line-height:12px;color:#0e0e0e;white-space:nowrap;font-weight:bold;letter-spacing:-0.3px;">Volts</div>
<svg style="left:735px;top:179px" width="26" height="21"><polygon points="6,10 21.5,1.5 21.5,19" fill="#b3b3b3" stroke="#4a4a4a" stroke-width="0.9"/><circle cx="4" cy="10" r="2.6" fill="#c8c8c8" stroke="#ececec" stroke-width="1"/><rect x="21.5" y="1.5" width="3.5" height="17.5" fill="#2a2a2a"/><rect x="22.8" y="2.5" width="1" height="15.5" fill="#7a7a7a"/></svg>
<div style="left:827px;top:161.24px;font-size:12px;line-height:12px;color:#0e0e0e;white-space:nowrap;font-weight:bold;letter-spacing:-0.27px;">Fundamental Frequency</div>
<div style="left:836px;top:177px;width:64px;height:26px;border:1px solid;border-color:#e4e4e4 #4a4a4a #4a4a4a #e4e4e4;"></div>
<div style="left:838px;top:179px;width:60px;height:22px;border:1px solid;border-color:#6a6a6a #f4f4f4 #f4f4f4 #6a6a6a;background:#d4d4d4;"></div>
<div style="left:841.5px;top:184.26px;font-size:16px;line-height:16px;color:#1a1a1a;white-space:nowrap;letter-spacing:-0.4px;">360.1</div>
<div style="left:910px;top:187.02px;font-size:12.5px;line-height:12.5px;color:#0e0e0e;white-space:nowrap;font-weight:bold;letter-spacing:-0.3px;">Hz</div>
<div style="left:690px;top:213px;width:300px;height:1px;background:#111;"></div>
<div style="left:795px;top:219px;width:1px;height:252px;background:#111;"></div>
<div style="left:925px;top:222px;width:1px;height:249px;background:#111;"></div>
<div style="left:676px;top:224.34px;font-size:12px;line-height:12px;color:#0e0e0e;white-space:nowrap;font-weight:bold;letter-spacing:-0.3px;">V1 RMS</div>
<div style="left:803px;top:223.34px;font-size:12px;line-height:12px;color:#0e0e0e;white-space:nowrap;font-weight:bold;letter-spacing:-0.3px;">A1 RMS</div>
<div style="left:938px;top:223.84px;font-size:12px;line-height:12px;color:#0e0e0e;white-space:nowrap;font-weight:bold;letter-spacing:-0.15px;">Ch1 Watts</div>
<div style="left:675px;top:239px;width:112px;height:27px;border:1px solid;border-color:#e4e4e4 #4a4a4a #4a4a4a #e4e4e4;"></div>
<div style="left:677px;top:241px;width:108px;height:23px;border:1px solid;border-color:#6a6a6a #f4f4f4 #f4f4f4 #6a6a6a;background:#d4d4d4;"></div>
<div style="left:803px;top:239px;width:112px;height:27px;border:1px solid;border-color:#e4e4e4 #4a4a4a #4a4a4a #e4e4e4;"></div>
<div style="left:805px;top:241px;width:108px;height:23px;border:1px solid;border-color:#6a6a6a #f4f4f4 #f4f4f4 #6a6a6a;background:#d4d4d4;"></div>
<div style="left:937px;top:239px;width:64px;height:27px;border:1px solid;border-color:#e4e4e4 #4a4a4a #4a4a4a #e4e4e4;"></div>
<div style="left:939px;top:241px;width:60px;height:23px;border:1px solid;border-color:#6a6a6a #f4f4f4 #f4f4f4 #6a6a6a;background:#d4d4d4;"></div>
<div style="left:680.5px;top:247.06px;font-size:16px;line-height:16px;color:#111;white-space:nowrap;letter-spacing:-0.5px;">10.13</div>
<div style="left:807.5px;top:247.06px;font-size:16px;line-height:16px;color:#111;white-space:nowrap;letter-spacing:-0.5px;">0.70</div>
<div style="left:942px;top:247.06px;font-size:16px;line-height:16px;color:#111;white-space:nowrap;letter-spacing:-0.5px;">5.3</div>
<svg style="left:730px;top:242px" width="22" height="19"><path d="M1,18 L12.5,2 M1,18 H19.5" stroke="#111" stroke-width="1.1" fill="none"/></svg>
<div style="left:742.3px;top:246.81px;font-size:10.5px;line-height:10.5px;color:#111;white-space:nowrap;font-weight:bold;letter-spacing:0.1px;">4.0</div>
<svg style="left:856px;top:242px" width="22" height="19"><path d="M1,18 L12.5,2 M1,18 H19.5" stroke="#111" stroke-width="1.1" fill="none"/></svg>
<div style="left:868.3px;top:246.81px;font-size:10.5px;line-height:10.5px;color:#111;white-space:nowrap;font-weight:bold;letter-spacing:0.1px;">28.6</div>
<div style="left:676px;top:285.34px;font-size:12px;line-height:12px;color:#0e0e0e;white-space:nowrap;font-weight:bold;letter-spacing:-0.3px;">V2 RMS</div>
<div style="left:803px;top:284.34px;font-size:12px;line-height:12px;color:#0e0e0e;white-space:nowrap;font-weight:bold;letter-spacing:-0.3px;">A2 RMS</div>
<div style="left:938px;top:284.84px;font-size:12px;line-height:12px;color:#0e0e0e;white-space:nowrap;font-weight:bold;letter-spacing:-0.15px;">Ch2 Watts</div>
<div style="left:675px;top:301px;width:112px;height:27px;border:1px solid;border-color:#e4e4e4 #4a4a4a #4a4a4a #e4e4e4;"></div>
<div style="left:677px;top:303px;width:108px;height:23px;border:1px solid;border-color:#6a6a6a #f4f4f4 #f4f4f4 #6a6a6a;background:#d4d4d4;"></div>
<div style="left:803px;top:301px;width:112px;height:27px;border:1px solid;border-color:#e4e4e4 #4a4a4a #4a4a4a #e4e4e4;"></div>
<div style="left:805px;top:303px;width:108px;height:23px;border:1px solid;border-color:#6a6a6a #f4f4f4 #f4f4f4 #6a6a6a;background:#d4d4d4;"></div>
<div style="left:937px;top:301px;width:64px;height:27px;border:1px solid;border-color:#e4e4e4 #4a4a4a #4a4a4a #e4e4e4;"></div>
<div style="left:939px;top:303px;width:60px;height:23px;border:1px solid;border-color:#6a6a6a #f4f4f4 #f4f4f4 #6a6a6a;background:#d4d4d4;"></div>
<div style="left:680.5px;top:309.06px;font-size:16px;line-height:16px;color:#111;white-space:nowrap;letter-spacing:-0.5px;">12.08</div>
<div style="left:807.5px;top:309.06px;font-size:16px;line-height:16px;color:#111;white-space:nowrap;letter-spacing:-0.5px;">1.02</div>
<div style="left:942px;top:309.06px;font-size:16px;line-height:16px;color:#111;white-space:nowrap;letter-spacing:-0.5px;">10.5</div>
<svg style="left:730px;top:304px" width="22" height="19"><path d="M1,18 L12.5,2 M1,18 H19.5" stroke="#111" stroke-width="1.1" fill="none"/></svg>
<div style="left:742.3px;top:308.81px;font-size:10.5px;line-height:10.5px;color:#111;white-space:nowrap;font-weight:bold;letter-spacing:0.1px;">-75.6</div>
<svg style="left:856px;top:304px" width="22" height="19"><path d="M1,18 L12.5,2 M1,18 H19.5" stroke="#111" stroke-width="1.1" fill="none"/></svg>
<div style="left:868.3px;top:308.81px;font-size:10.5px;line-height:10.5px;color:#111;white-space:nowrap;font-weight:bold;letter-spacing:0.1px;">-54.3</div>
<div style="left:676px;top:346.34px;font-size:12px;line-height:12px;color:#0e0e0e;white-space:nowrap;font-weight:bold;letter-spacing:-0.3px;">V3 RMS</div>
<div style="left:803px;top:345.34px;font-size:12px;line-height:12px;color:#0e0e0e;white-space:nowrap;font-weight:bold;letter-spacing:-0.3px;">A3 RMS</div>
<div style="left:938px;top:345.84px;font-size:12px;line-height:12px;color:#0e0e0e;white-space:nowrap;font-weight:bold;letter-spacing:-0.15px;">Ch3 Watts</div>
<div style="left:675px;top:362px;width:112px;height:27px;border:1px solid;border-color:#e4e4e4 #4a4a4a #4a4a4a #e4e4e4;"></div>
<div style="left:677px;top:364px;width:108px;height:23px;border:1px solid;border-color:#6a6a6a #f4f4f4 #f4f4f4 #6a6a6a;background:#d4d4d4;"></div>
<div style="left:803px;top:362px;width:112px;height:27px;border:1px solid;border-color:#e4e4e4 #4a4a4a #4a4a4a #e4e4e4;"></div>
<div style="left:805px;top:364px;width:108px;height:23px;border:1px solid;border-color:#6a6a6a #f4f4f4 #f4f4f4 #6a6a6a;background:#d4d4d4;"></div>
<div style="left:937px;top:362px;width:64px;height:27px;border:1px solid;border-color:#e4e4e4 #4a4a4a #4a4a4a #e4e4e4;"></div>
<div style="left:939px;top:364px;width:60px;height:23px;border:1px solid;border-color:#6a6a6a #f4f4f4 #f4f4f4 #6a6a6a;background:#d4d4d4;"></div>
<div style="left:680.5px;top:370.06px;font-size:16px;line-height:16px;color:#111;white-space:nowrap;letter-spacing:-0.5px;">11.91</div>
<div style="left:807.5px;top:370.06px;font-size:16px;line-height:16px;color:#111;white-space:nowrap;letter-spacing:-0.5px;">0.83</div>
<div style="left:942px;top:370.06px;font-size:16px;line-height:16px;color:#111;white-space:nowrap;letter-spacing:-0.5px;">10.0</div>
<svg style="left:730px;top:365px" width="22" height="19"><path d="M1,18 L12.5,2 M1,18 H19.5" stroke="#111" stroke-width="1.1" fill="none"/></svg>
<div style="left:742.3px;top:369.81px;font-size:10.5px;line-height:10.5px;color:#111;white-space:nowrap;font-weight:bold;letter-spacing:0.1px;">-95.9</div>
<svg style="left:856px;top:365px" width="22" height="19"><path d="M1,18 L12.5,2 M1,18 H19.5" stroke="#111" stroke-width="1.1" fill="none"/></svg>
<div style="left:868.3px;top:369.81px;font-size:10.5px;line-height:10.5px;color:#111;white-space:nowrap;font-weight:bold;letter-spacing:0.1px;">96.0</div>
<div style="left:687px;top:402.90px;font-size:15px;line-height:15px;color:#0e0e0e;white-space:nowrap;font-weight:bold;letter-spacing:-0.4px;">Avg Volts</div>
<div style="left:815px;top:401.10px;font-size:15px;line-height:15px;color:#0e0e0e;white-space:nowrap;font-weight:bold;letter-spacing:-0.05px;">Avg Amps</div>
<div style="left:930.5px;top:402.90px;font-size:15px;line-height:15px;color:#0e0e0e;white-space:nowrap;font-weight:bold;letter-spacing:-0.07px;">Tot Power</div>
<div style="left:686px;top:424px;width:77px;height:27px;border:1px solid;border-color:#e4e4e4 #4a4a4a #4a4a4a #e4e4e4;"></div>
<div style="left:688px;top:426px;width:73px;height:23px;border:1px solid;border-color:#6a6a6a #f4f4f4 #f4f4f4 #6a6a6a;background:#d4d4d4;"></div>
<div style="left:817px;top:424px;width:77px;height:27px;border:1px solid;border-color:#e4e4e4 #4a4a4a #4a4a4a #e4e4e4;"></div>
<div style="left:819px;top:426px;width:73px;height:23px;border:1px solid;border-color:#6a6a6a #f4f4f4 #f4f4f4 #6a6a6a;background:#d4d4d4;"></div>
<div style="left:937px;top:424px;width:64px;height:27px;border:1px solid;border-color:#e4e4e4 #4a4a4a #4a4a4a #e4e4e4;"></div>
<div style="left:939px;top:426px;width:60px;height:23px;border:1px solid;border-color:#6a6a6a #f4f4f4 #f4f4f4 #6a6a6a;background:#d4d4d4;"></div>
<div style="left:692px;top:430.61px;font-size:17px;line-height:17px;color:#0e0e0e;white-space:nowrap;font-weight:bold;letter-spacing:0.45px;">11.37</div>
<div style="left:822px;top:430.61px;font-size:17px;line-height:17px;color:#0e0e0e;white-space:nowrap;font-weight:bold;letter-spacing:0.45px;">0.85</div>
<div style="left:941.5px;top:430.61px;font-size:17px;line-height:17px;color:#0e0e0e;white-space:nowrap;font-weight:bold;letter-spacing:0.45px;">25.9</div>
<div style="left:681.8px;top:494.84px;font-size:12px;line-height:12px;color:#0e0e0e;white-space:nowrap;font-weight:bold;letter-spacing:-0.3px;">Sampling Period (mS)</div>
<svg style="left:683px;top:513px" width="314" height="20"><polygon points="7,1.5 7,18.5 1,10" fill="#8a8a8a" stroke="#d8d8d8" stroke-width="0.6"/><polygon points="305,1.5 305,18.5 311,10" fill="#8a8a8a" stroke="#d8d8d8" stroke-width="0.6"/></svg>
<div style="left:690px;top:514px;width:2px;height:17px;background:#d8d8d8;"></div>
<div style="left:692px;top:514px;width:294px;height:17px;background:#333;"></div>
<div style="left:986px;top:514px;width:2px;height:17px;background:#a8a8a8;"></div>
<div style="left:891px;top:511px;width:10px;height:24px;background:#3c93ee;border:1px solid #2a6cc0;box-sizing:border-box;"></div>
<div style="left:895px;top:512px;width:1px;height:22px;background:#1e4e90;"></div>
<div style="left:893px;top:512px;width:1px;height:22px;background:#8cc4ff;"></div>
<div style="left:897px;top:512px;width:1px;height:22px;background:#8cc4ff;"></div>
<div style="left:693px;top:535.5px;width:1px;height:5px;background:#111;"></div>
<div style="left:714px;top:536.5px;width:1px;height:2px;background:#111;"></div>
<div style="left:725px;top:536.5px;width:1px;height:2px;background:#111;"></div>
<div style="left:734px;top:536.5px;width:1px;height:2px;background:#111;"></div>
<div style="left:740px;top:536.5px;width:1px;height:2px;background:#111;"></div>
<div style="left:746px;top:536.5px;width:1px;height:2px;background:#111;"></div>
<div style="left:750px;top:536.5px;width:1px;height:2px;background:#111;"></div>
<div style="left:754px;top:536.5px;width:1px;height:2px;background:#111;"></div>
<div style="left:758px;top:536.5px;width:1px;height:2px;background:#111;"></div>
<div style="left:761px;top:535.5px;width:1px;height:5px;background:#111;"></div>
<div style="left:781px;top:536.5px;width:1px;height:2px;background:#111;"></div>
<div style="left:793px;top:536.5px;width:1px;height:2px;background:#111;"></div>
<div style="left:801px;top:536.5px;width:1px;height:2px;background:#111;"></div>
<div style="left:808px;top:536.5px;width:1px;height:2px;background:#111;"></div>
<div style="left:813px;top:536.5px;width:1px;height:2px;background:#111;"></div>
<div style="left:818px;top:536.5px;width:1px;height:2px;background:#111;"></div>
<div style="left:822px;top:536.5px;width:1px;height:2px;background:#111;"></div>
<div style="left:825px;top:536.5px;width:1px;height:2px;background:#111;"></div>
<div style="left:828px;top:535.5px;width:1px;height:5px;background:#111;"></div>
<div style="left:849px;top:536.5px;width:1px;height:2px;background:#111;"></div>
<div style="left:861px;top:536.5px;width:1px;height:2px;background:#111;"></div>
<div style="left:869px;top:536.5px;width:1px;height:2px;background:#111;"></div>
<div style="left:876px;top:536.5px;width:1px;height:2px;background:#111;"></div>
<div style="left:881px;top:536.5px;width:1px;height:2px;background:#111;"></div>
<div style="left:886px;top:536.5px;width:1px;height:2px;background:#111;"></div>
<div style="left:889px;top:536.5px;width:1px;height:2px;background:#111;"></div>
<div style="left:893px;top:536.5px;width:1px;height:2px;background:#111;"></div>
<div style="left:896px;top:535.5px;width:1px;height:5px;background:#111;"></div>
<div style="left:916px;top:536.5px;width:1px;height:2px;background:#111;"></div>
<div style="left:928px;top:536.5px;width:1px;height:2px;background:#111;"></div>
<div style="left:937px;top:536.5px;width:1px;height:2px;background:#111;"></div>
<div style="left:943px;top:536.5px;width:1px;height:2px;background:#111;"></div>
<div style="left:949px;top:536.5px;width:1px;height:2px;background:#111;"></div>
<div style="left:953px;top:536.5px;width:1px;height:2px;background:#111;"></div>
<div style="left:957px;top:536.5px;width:1px;height:2px;background:#111;"></div>
<div style="left:961px;top:536.5px;width:1px;height:2px;background:#111;"></div>
<div style="left:964px;top:535.5px;width:1px;height:5px;background:#111;"></div>
<div style="left:984px;top:535.5px;width:1px;height:5px;background:#111;"></div>
<div style="left:663px;top:541.70px;font-size:13px;line-height:13px;color:#0e0e0e;white-space:nowrap;font-weight:bold;letter-spacing:-0.3px;width:60px;text-align:center;">0.1</div>
<div style="left:731px;top:541.70px;font-size:13px;line-height:13px;color:#0e0e0e;white-space:nowrap;font-weight:bold;letter-spacing:-0.3px;width:60px;text-align:center;">1</div>
<div style="left:798.5px;top:541.70px;font-size:13px;line-height:13px;color:#0e0e0e;white-space:nowrap;font-weight:bold;letter-spacing:-0.3px;width:60px;text-align:center;">10</div>
<div style="left:866px;top:541.70px;font-size:13px;line-height:13px;color:#0e0e0e;white-space:nowrap;font-weight:bold;letter-spacing:-0.3px;width:60px;text-align:center;">100</div>
<div style="left:954px;top:541.70px;font-size:13px;line-height:13px;color:#0e0e0e;white-space:nowrap;font-weight:bold;letter-spacing:-0.3px;width:60px;text-align:center;">2000</div>
<div style="left:689.3px;top:577.64px;font-size:12px;line-height:12px;color:#0e0e0e;white-space:nowrap;font-weight:bold;letter-spacing:-0.2px;">Filter</div>
<div style="left:679px;top:594px;width:57px;height:26px;box-sizing:border-box;border:1px solid #000;"></div>
<div style="left:680px;top:595px;width:55px;height:24px;box-sizing:border-box;border:2px solid;border-color:#e6e6e6 #6a6a6a #6a6a6a #e6e6e6;background:#b3b3b3;"></div>
<div style="left:679px;top:600.40px;font-size:13px;line-height:13px;color:#0e0e0e;white-space:nowrap;font-weight:bold;letter-spacing:-0.2px;width:57px;text-align:center;">OFF</div>
<div style="left:762px;top:570px;width:126px;height:17px;background:#c8c8c8;"></div>
<div style="left:763.5px;top:572.64px;font-size:12px;line-height:12px;color:#858585;white-space:nowrap;font-weight:bold;letter-spacing:-0.15px;">Cutoff Frequency (Hz)</div>
<div style="left:753px;top:595px;width:245px;height:21px;background:#c8c8c8;"></div>
<div style="left:753px;top:616px;width:254px;height:6px;background:#bdbdbd;"></div>
<svg style="left:752px;top:594px" width="248" height="24"><polygon points="9,3 9,20 2,11.5" fill="#b4b4b4" stroke="#8a8a8a" stroke-width="0.6"/><polygon points="239,3 239,20 246,11.5" fill="#b4b4b4" stroke="#8a8a8a" stroke-width="0.6"/></svg>
<div style="left:762px;top:596px;width:226px;height:18px;background:#8e8e8e;"></div>
<div style="left:751px;top:622px;width:259px;height:21px;background:#cfcfcf;"></div>
<div style="left:763px;top:622px;width:1px;height:5px;background:#707070;"></div>
<div style="left:786px;top:623px;width:1px;height:2px;background:#707070;"></div>
<div style="left:799px;top:623px;width:1px;height:2px;background:#707070;"></div>
<div style="left:808px;top:623px;width:1px;height:2px;background:#707070;"></div>
<div style="left:816px;top:623px;width:1px;height:2px;background:#707070;"></div>
<div style="left:821px;top:623px;width:1px;height:2px;background:#707070;"></div>
<div style="left:826px;top:623px;width:1px;height:2px;background:#707070;"></div>
<div style="left:831px;top:623px;width:1px;height:2px;background:#707070;"></div>
<div style="left:835px;top:623px;width:1px;height:2px;background:#707070;"></div>
<div style="left:838px;top:622px;width:1px;height:5px;background:#707070;"></div>
<div style="left:860px;top:623px;width:1px;height:2px;background:#707070;"></div>
<div style="left:874px;top:623px;width:1px;height:2px;background:#707070;"></div>
<div style="left:883px;top:623px;width:1px;height:2px;background:#707070;"></div>
<div style="left:890px;top:623px;width:1px;height:2px;background:#707070;"></div>
<div style="left:896px;top:623px;width:1px;height:2px;background:#707070;"></div>
<div style="left:901px;top:623px;width:1px;height:2px;background:#707070;"></div>
<div style="left:905px;top:623px;width:1px;height:2px;background:#707070;"></div>
<div style="left:909px;top:623px;width:1px;height:2px;background:#707070;"></div>
<div style="left:913px;top:622px;width:1px;height:5px;background:#707070;"></div>
<div style="left:935px;top:623px;width:1px;height:2px;background:#707070;"></div>
<div style="left:948px;top:623px;width:1px;height:2px;background:#707070;"></div>
<div style="left:958px;top:623px;width:1px;height:2px;background:#707070;"></div>
<div style="left:965px;top:623px;width:1px;height:2px;background:#707070;"></div>
<div style="left:971px;top:623px;width:1px;height:2px;background:#707070;"></div>
<div style="left:976px;top:623px;width:1px;height:2px;background:#707070;"></div>
<div style="left:980px;top:623px;width:1px;height:2px;background:#707070;"></div>
<div style="left:984px;top:623px;width:1px;height:2px;background:#707070;"></div>
<div style="left:987px;top:622px;width:1px;height:5px;background:#707070;"></div>
<div style="left:866px;top:614px;width:15px;height:9px;background:#c8c8c8;"></div>
<svg style="left:866px;top:588px" width="15" height="35"><polygon points="1,1 14,1 7.5,33" fill="#8cc0f8" stroke="#6aa0e0" stroke-width="0.6"/></svg>
<div style="left:723px;top:626.65px;font-size:14px;line-height:14px;color:#767676;white-space:nowrap;letter-spacing:-1.05px;width:80px;text-align:center;">100</div>
<div style="left:798.7px;top:626.65px;font-size:14px;line-height:14px;color:#767676;white-space:nowrap;letter-spacing:-1.05px;width:80px;text-align:center;">1000</div>
<div style="left:872px;top:626.65px;font-size:14px;line-height:14px;color:#767676;white-space:nowrap;letter-spacing:-1.05px;width:80px;text-align:center;">10000</div>
<div style="left:947.5px;top:626.65px;font-size:14px;line-height:14px;color:#767676;white-space:nowrap;letter-spacing:-1.05px;width:80px;text-align:center;">100000</div>
<div style="left:127px;top:705px;width:79px;height:41px;box-sizing:border-box;border:1px solid #000;"></div>
<div style="left:128px;top:706px;width:77px;height:39px;box-sizing:border-box;border:2px solid;border-color:#e6e6e6 #6a6a6a #6a6a6a #e6e6e6;background:#b3b3b3;"></div>
<div style="left:127px;top:719.15px;font-size:14px;line-height:14px;color:#ee1010;white-space:nowrap;font-weight:bold;letter-spacing:-1.2px;width:79px;text-align:center;">Pause</div>
<div style="left:244px;top:705px;width:81px;height:41px;box-sizing:border-box;border:1px solid #8c8c8c;"></div>
<div style="left:245px;top:706px;width:79px;height:39px;box-sizing:border-box;border:2px solid;border-color:#e8e8e8 #9a9a9a #9a9a9a #e8e8e8;background:#d0d0d0;"></div>
<div style="left:242.5px;top:712.94px;font-size:12px;line-height:12px;color:#7e7e7e;white-space:nowrap;font-weight:bold;letter-spacing:-1.0px;width:81px;text-align:center;">Save</div>
<div style="left:242.5px;top:725.74px;font-size:12px;line-height:12px;color:#7e7e7e;white-space:nowrap;font-weight:bold;letter-spacing:-1.0px;width:81px;text-align:center;">Data</div>
<div style="left:363px;top:707px;width:200px;height:23px;background:#c4c4c4;"></div>
<svg style="left:363px;top:707px" width="200" height="23"><polygon points="7,4 7,19 1.5,11.5" fill="none" stroke="#8a8a8a" stroke-width="0.8"/><polygon points="192,4 192,19 198,11.5" fill="none" stroke="#8a8a8a" stroke-width="0.8"/></svg>
<div style="left:376px;top:708px;width:177px;height:21px;background:#8e8e8e;"></div>
<div style="left:369px;top:707px;width:8px;height:23px;background:#a6cdf6;border:1px solid #6a9ad0;box-sizing:border-box;"></div>
<div style="left:372px;top:708px;width:1px;height:21px;background:#4a7cc0;"></div>
<div style="left:369px;top:731px;width:190px;height:22px;background:#cfcfcf;"></div>
<div style="left:373px;top:731px;width:1px;height:5px;background:#6a6a6a;"></div>
<div style="left:382px;top:731px;width:1px;height:3px;background:#6a6a6a;"></div>
<div style="left:391px;top:731px;width:1px;height:3px;background:#6a6a6a;"></div>
<div style="left:400px;top:731px;width:1px;height:3px;background:#6a6a6a;"></div>
<div style="left:408px;top:731px;width:1px;height:3px;background:#6a6a6a;"></div>
<div style="left:417px;top:731px;width:1px;height:3px;background:#6a6a6a;"></div>
<div style="left:426px;top:731px;width:1px;height:3px;background:#6a6a6a;"></div>
<div style="left:435px;top:731px;width:1px;height:3px;background:#6a6a6a;"></div>
<div style="left:444px;top:731px;width:1px;height:3px;background:#6a6a6a;"></div>
<div style="left:453px;top:731px;width:1px;height:3px;background:#6a6a6a;"></div>
<div style="left:462px;top:731px;width:1px;height:3px;background:#6a6a6a;"></div>
<div style="left:471px;top:731px;width:1px;height:3px;background:#6a6a6a;"></div>
<div style="left:480px;top:731px;width:1px;height:3px;background:#6a6a6a;"></div>
<div style="left:489px;top:731px;width:1px;height:3px;background:#6a6a6a;"></div>
<div style="left:498px;top:731px;width:1px;height:3px;background:#6a6a6a;"></div>
<div style="left:507px;top:731px;width:1px;height:3px;background:#6a6a6a;"></div>
<div style="left:516px;top:731px;width:1px;height:3px;background:#6a6a6a;"></div>
<div style="left:525px;top:731px;width:1px;height:3px;background:#6a6a6a;"></div>
<div style="left:533px;top:731px;width:1px;height:3px;background:#6a6a6a;"></div>
<div style="left:542px;top:731px;width:1px;height:3px;background:#6a6a6a;"></div>
<div style="left:551px;top:731px;width:1px;height:5px;background:#6a6a6a;"></div>
<div style="left:342.8px;top:737.90px;font-size:13px;line-height:13px;color:#6e6e6e;white-space:nowrap;letter-spacing:-0.3px;width:60px;text-align:center;">1</div>
<div style="left:384.3px;top:737.90px;font-size:13px;line-height:13px;color:#6e6e6e;white-space:nowrap;letter-spacing:-0.3px;width:60px;text-align:center;">10</div>
<div style="left:430px;top:737.90px;font-size:13px;line-height:13px;color:#6e6e6e;white-space:nowrap;letter-spacing:-0.3px;width:60px;text-align:center;">20</div>
<div style="left:475.1px;top:737.90px;font-size:13px;line-height:13px;color:#6e6e6e;white-space:nowrap;letter-spacing:-0.3px;width:60px;text-align:center;">30</div>
<div style="left:521.3px;top:737.90px;font-size:13px;line-height:13px;color:#6e6e6e;white-space:nowrap;letter-spacing:-0.3px;width:60px;text-align:center;">40</div>
<div style="left:570px;top:708px;width:35px;height:15px;background:#c8c8c8;"></div>
<div style="left:572px;top:708.84px;font-size:12px;line-height:12px;color:#777;white-space:nowrap;font-weight:bold;letter-spacing:-0.3px;">Zoom</div>
<div style="left:646px;top:707px;width:209px;height:19px;background:#c4c4c4;"></div>
<svg style="left:646px;top:707px" width="209" height="19"><polygon points="7,4 7,15 1.5,9.5" fill="none" stroke="#8a8a8a" stroke-width="0.8"/><polygon points="201,4 201,15 207,9.5" fill="none" stroke="#8a8a8a" stroke-width="0.8"/></svg>
<div style="left:659px;top:708px;width:187px;height:17px;background:#8e8e8e;"></div>
<div style="left:652px;top:707px;width:8px;height:19px;background:#a6cdf6;border:1px solid #6a9ad0;box-sizing:border-box;"></div>
<div style="left:655px;top:708px;width:1px;height:17px;background:#4a7cc0;"></div>
<div style="left:652px;top:728px;width:197px;height:22px;background:#cfcfcf;"></div>
<div style="left:656px;top:728px;width:1px;height:5px;background:#6a6a6a;"></div>
<div style="left:666px;top:728px;width:1px;height:3px;background:#6a6a6a;"></div>
<div style="left:675px;top:728px;width:1px;height:3px;background:#6a6a6a;"></div>
<div style="left:684px;top:728px;width:1px;height:3px;background:#6a6a6a;"></div>
<div style="left:694px;top:728px;width:1px;height:5px;background:#6a6a6a;"></div>
<div style="left:703px;top:728px;width:1px;height:3px;background:#6a6a6a;"></div>
<div style="left:713px;top:728px;width:1px;height:3px;background:#6a6a6a;"></div>
<div style="left:722px;top:728px;width:1px;height:3px;background:#6a6a6a;"></div>
<div style="left:731px;top:728px;width:1px;height:5px;background:#6a6a6a;"></div>
<div style="left:741px;top:728px;width:1px;height:3px;background:#6a6a6a;"></div>
<div style="left:750px;top:728px;width:1px;height:3px;background:#6a6a6a;"></div>
<div style="left:760px;top:728px;width:1px;height:3px;background:#6a6a6a;"></div>
<div style="left:769px;top:728px;width:1px;height:5px;background:#6a6a6a;"></div>
<div style="left:778px;top:728px;width:1px;height:3px;background:#6a6a6a;"></div>
<div style="left:788px;top:728px;width:1px;height:3px;background:#6a6a6a;"></div>
<div style="left:797px;top:728px;width:1px;height:3px;background:#6a6a6a;"></div>
<div style="left:807px;top:728px;width:1px;height:5px;background:#6a6a6a;"></div>
<div style="left:816px;top:728px;width:1px;height:3px;background:#6a6a6a;"></div>
<div style="left:825px;top:728px;width:1px;height:3px;background:#6a6a6a;"></div>
<div style="left:835px;top:728px;width:1px;height:3px;background:#6a6a6a;"></div>
<div style="left:844px;top:728px;width:1px;height:5px;background:#6a6a6a;"></div>
<div style="left:626.2px;top:735.30px;font-size:13px;line-height:13px;color:#6e6e6e;white-space:nowrap;letter-spacing:-0.3px;width:60px;text-align:center;">0</div>
<div style="left:663.5px;top:735.30px;font-size:13px;line-height:13px;color:#6e6e6e;white-space:nowrap;letter-spacing:-0.3px;width:60px;text-align:center;">0.2</div>
<div style="left:700.9px;top:735.30px;font-size:13px;line-height:13px;color:#6e6e6e;white-space:nowrap;letter-spacing:-0.3px;width:60px;text-align:center;">0.4</div>
<div style="left:738.5px;top:735.30px;font-size:13px;line-height:13px;color:#6e6e6e;white-space:nowrap;letter-spacing:-0.3px;width:60px;text-align:center;">0.6</div>
<div style="left:775.8px;top:735.30px;font-size:13px;line-height:13px;color:#6e6e6e;white-space:nowrap;letter-spacing:-0.3px;width:60px;text-align:center;">0.8</div>
<div style="left:814.2px;top:735.30px;font-size:13px;line-height:13px;color:#6e6e6e;white-space:nowrap;letter-spacing:-0.3px;width:60px;text-align:center;">1</div>
<div style="left:860px;top:708px;width:46px;height:15px;background:#c8c8c8;"></div>
<div style="left:862px;top:708.84px;font-size:12px;line-height:12px;color:#777;white-space:nowrap;font-weight:bold;letter-spacing:-0.7px;">Position</div>
</body></html>
